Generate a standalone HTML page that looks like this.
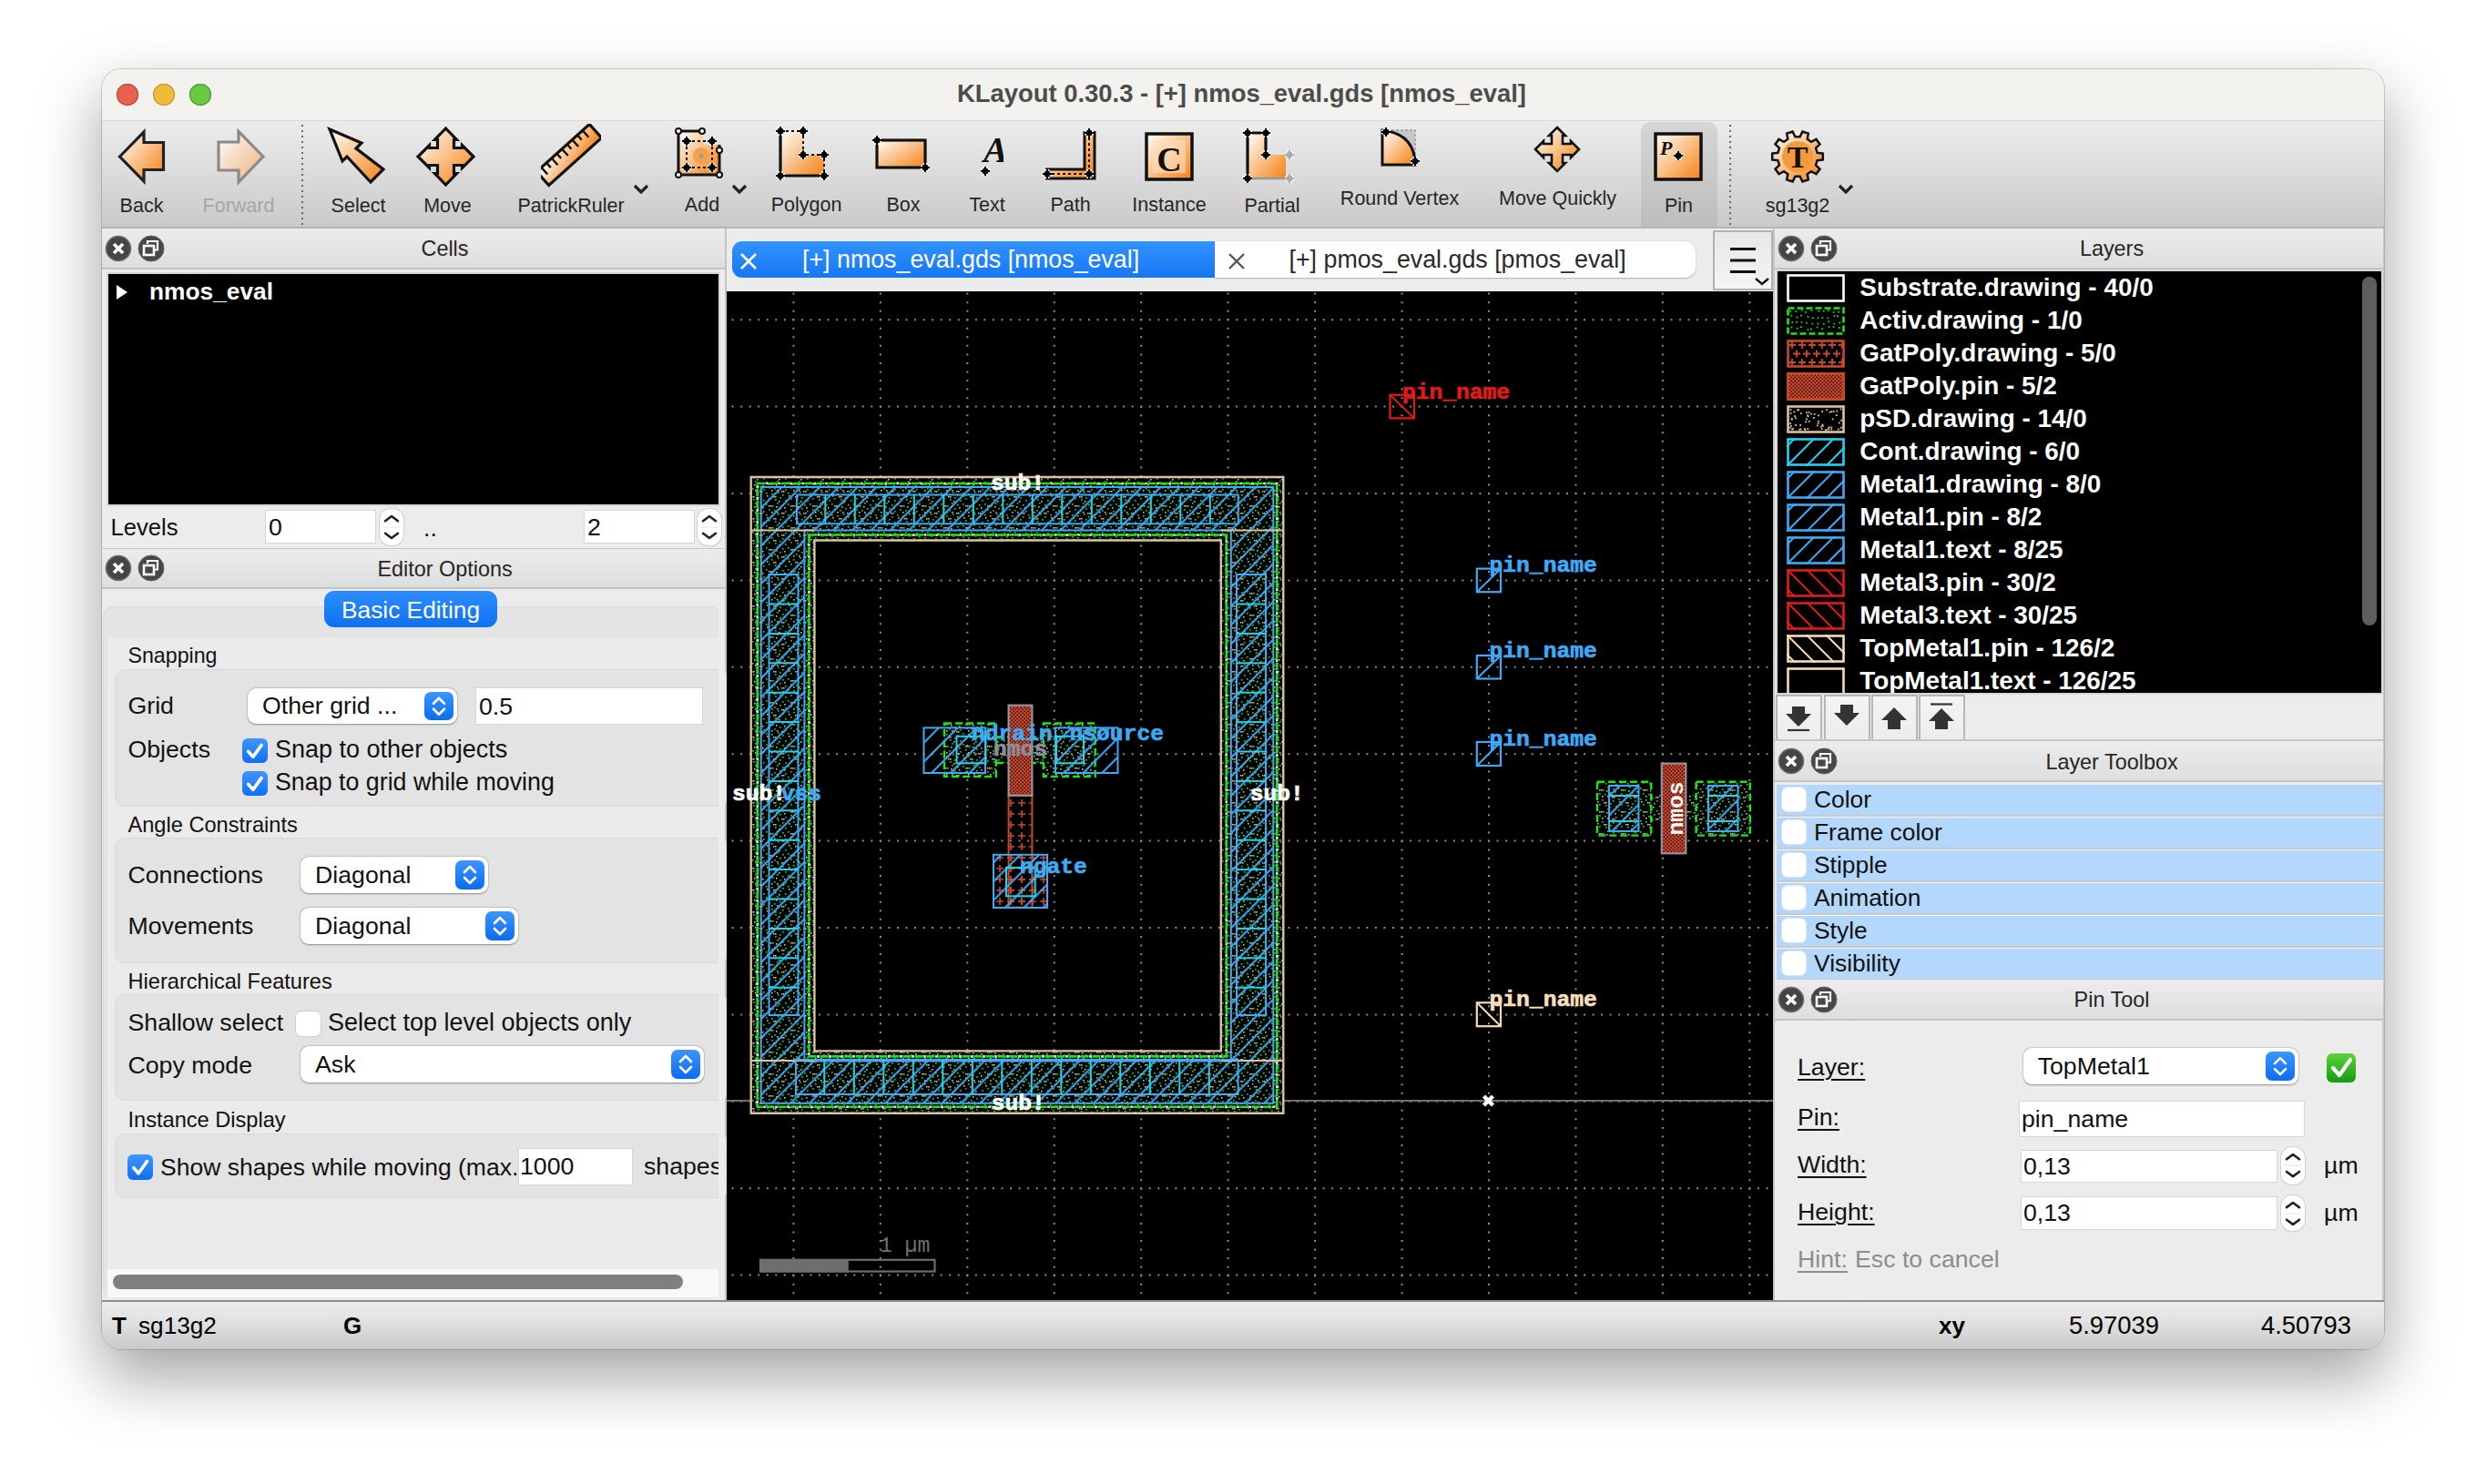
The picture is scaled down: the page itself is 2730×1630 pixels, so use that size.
<!DOCTYPE html><html><head><meta charset="utf-8"><style>html,body{margin:0;padding:0;}body{width:2730px;height:1630px;position:relative;overflow:hidden;background:#fff;font-family:"Liberation Sans",sans-serif;}</style></head><body>
<div style="position:absolute;left:112.00px;top:75.50px;width:2506.00px;height:1406.50px;border-radius:21px;background:#ececec;box-shadow:0 30px 70px 2px rgba(0,0,0,0.36), 0 0 0 1px rgba(0,0,0,0.16);"></div>
<div style="position:absolute;left:112.00px;top:75.50px;width:2506.00px;height:57.50px;border-radius:21px 21px 0 0;background:#f3f2ef;border-bottom:1px solid #d6d6d6;box-sizing:border-box;"></div>
<div style="position:absolute;left:127.90px;top:92.10px;width:23.80px;height:23.80px;border-radius:50%;background:#e9624f;box-shadow:inset 0 0 0 1.2px #b94a3b;"></div>
<div style="position:absolute;left:168.30px;top:92.10px;width:23.80px;height:23.80px;border-radius:50%;background:#f0bb3a;box-shadow:inset 0 0 0 1.2px #c59a2e;"></div>
<div style="position:absolute;left:208.30px;top:92.10px;width:23.80px;height:23.80px;border-radius:50%;background:#6bc845;box-shadow:inset 0 0 0 1.2px #4b9a33;"></div>
<div style="position:absolute;top:88.80px;font:bold 27.4px/27.4px 'Liberation Sans', sans-serif;color:#4c4c4c;white-space:nowrap;left:1363.50px;transform:translateX(-50%);">KLayout 0.30.3 - [+] nmos_eval.gds [nmos_eval]</div>
<div style="position:absolute;left:112.00px;top:1428.00px;width:2506.00px;height:54.00px;border-radius:0 0 20px 20px;background:linear-gradient(#ececec,#e2e2e2 40%,#c9c9c9);border-top:2px solid #8e8e8e;box-sizing:border-box;"></div>
<div style="position:absolute;top:1442.99px;font:bold 26px/26px 'Liberation Sans', sans-serif;color:#000;white-space:nowrap;left:123.00px;">T</div>
<div style="position:absolute;top:1442.82px;font:normal 26.2px/26.2px 'Liberation Sans', sans-serif;color:#000;white-space:nowrap;left:152.00px;">sg13g2</div>
<div style="position:absolute;top:1442.99px;font:bold 26px/26px 'Liberation Sans', sans-serif;color:#000;white-space:nowrap;left:377.00px;">G</div>
<div style="position:absolute;top:1442.99px;font:bold 26px/26px 'Liberation Sans', sans-serif;color:#000;white-space:nowrap;left:2129.00px;">xy</div>
<div style="position:absolute;top:1441.80px;font:normal 27.4px/27.4px 'Liberation Sans', sans-serif;color:#000;white-space:nowrap;left:2272.00px;">5.97039</div>
<div style="position:absolute;top:1441.80px;font:normal 27.4px/27.4px 'Liberation Sans', sans-serif;color:#000;white-space:nowrap;left:2483.00px;">4.50793</div>
<div style="position:absolute;left:112.00px;top:133.00px;width:2506.00px;height:118.00px;background:linear-gradient(#ececec,#cacaca);border-bottom:2px solid #b4b4b4;box-sizing:border-box;"></div>
<div style="position:absolute;left:1802.00px;top:134.00px;width:84.00px;height:115.00px;border-radius:10px 10px 0 0;background:linear-gradient(#d6d6d6,#bdbdbd);"></div>
<div style="position:absolute;left:331.00px;top:137.00px;width:2.00px;height:110.00px;background:repeating-linear-gradient(#6a6a6a 0 2px, transparent 2px 6px);"></div>
<div style="position:absolute;left:1899.00px;top:137.00px;width:2.00px;height:110.00px;background:repeating-linear-gradient(#6a6a6a 0 2px, transparent 2px 6px);"></div>
<svg style="position:absolute;left:126px;top:140px;" width="60" height="64" viewBox="0 0 60 64"><defs><linearGradient id="gb" x1="0" y1="0" x2="1" y2="1"><stop offset="0" stop-color="#ffffff"/><stop offset="0.75" stop-color="#f7a04a"/><stop offset="1" stop-color="#f38320"/></linearGradient></defs><path d="M5.5 32 L32 5 L32 16.5 L53.5 16.5 L53.5 46.5 L32 46.5 L32 59 Z" fill="url(#gb)" stroke="#222" stroke-width="3.2" stroke-linejoin="miter"/></svg>
<div style="position:absolute;top:215.80px;font:normal 21.5px/21.5px 'Liberation Sans', sans-serif;color:#262626;white-space:nowrap;left:155.50px;transform:translateX(-50%);">Back</div>
<svg style="position:absolute;left:234px;top:140px;" width="60" height="64" viewBox="0 0 60 64"><defs><linearGradient id="gf" x1="0" y1="0" x2="1" y2="1"><stop offset="0" stop-color="#ffffff"/><stop offset="0.75" stop-color="#efc39a"/><stop offset="1" stop-color="#eab07a"/></linearGradient></defs><path d="M55 32 L28 4.5 L28 16 L6 16 L6 47 L28 47 L28 60 Z" fill="url(#gf)" stroke="#8a8a8a" stroke-width="3.2"/></svg>
<div style="position:absolute;top:215.80px;font:normal 21.5px/21.5px 'Liberation Sans', sans-serif;color:#a6a6a6;white-space:nowrap;left:262.00px;transform:translateX(-50%);">Forward</div>
<svg style="position:absolute;left:356px;top:136px;" width="72" height="70" viewBox="0 0 72 70"><defs><linearGradient id="gs" x1="0" y1="0" x2="1" y2="1"><stop offset="0" stop-color="#ffffff"/><stop offset="0.75" stop-color="#f7a04a"/><stop offset="1" stop-color="#f38320"/></linearGradient></defs><path d="M6 6 L41 21 L35 27 L65 50 L51 64 L25 36 L20 41 Z" fill="url(#gs)" stroke="#111" stroke-width="3.2" stroke-linejoin="miter"/></svg>
<div style="position:absolute;top:215.80px;font:normal 21.5px/21.5px 'Liberation Sans', sans-serif;color:#262626;white-space:nowrap;left:393.50px;transform:translateX(-50%);">Select</div>
<svg style="position:absolute;left:455px;top:137px;" width="72" height="70" viewBox="0 0 72 70"><defs><linearGradient id="gm" x1="0" y1="0" x2="1" y2="1"><stop offset="0" stop-color="#ffffff"/><stop offset="0.75" stop-color="#f7a04a"/><stop offset="1" stop-color="#f38320"/></linearGradient></defs><path d="M34.5 4 L46.5 16.5 L43.5 16.5 L43.5 25.5 L52.5 25.5 L52.5 22.5 L65 35 L52.5 47.5 L52.5 44.5 L43.5 44.5 L43.5 53.5 L46.5 53.5 L34.5 66 L22.5 53.5 L25.5 53.5 L25.5 44.5 L16.5 44.5 L16.5 47.5 L4 35 L16.5 22.5 L16.5 25.5 L25.5 25.5 L25.5 16.5 L22.5 16.5 Z" fill="url(#gm)" stroke="#111" stroke-width="3.2"/></svg>
<div style="position:absolute;top:215.80px;font:normal 21.5px/21.5px 'Liberation Sans', sans-serif;color:#262626;white-space:nowrap;left:491.50px;transform:translateX(-50%);">Move</div>
<svg style="position:absolute;left:594px;top:136px;" width="66" height="70" viewBox="0 0 66 70"><defs><linearGradient id="gr" x1="0" y1="0" x2="1" y2="1"><stop offset="0" stop-color="#ffffff"/><stop offset="0.75" stop-color="#f7a04a"/><stop offset="1" stop-color="#f38320"/></linearGradient></defs><g transform="translate(31,34) rotate(-42)"><rect x="-39" y="-10" width="78" height="20" fill="url(#gr)" stroke="#111" stroke-width="3.2"/><path d="M-32.0 -9 L-32.0 0" stroke="#111" stroke-width="2.4"/><path d="M-24.4 -9 L-24.4 -3" stroke="#111" stroke-width="2.4"/><path d="M-16.8 -9 L-16.8 0" stroke="#111" stroke-width="2.4"/><path d="M-9.2 -9 L-9.2 -3" stroke="#111" stroke-width="2.4"/><path d="M-1.6 -9 L-1.6 0" stroke="#111" stroke-width="2.4"/><path d="M6.0 -9 L6.0 -3" stroke="#111" stroke-width="2.4"/><path d="M13.6 -9 L13.6 0" stroke="#111" stroke-width="2.4"/><path d="M21.2 -9 L21.2 -3" stroke="#111" stroke-width="2.4"/><path d="M28.8 -9 L28.8 0" stroke="#111" stroke-width="2.4"/></g></svg>
<div style="position:absolute;top:215.80px;font:normal 21.5px/21.5px 'Liberation Sans', sans-serif;color:#262626;white-space:nowrap;left:627.00px;transform:translateX(-50%);">PatrickRuler</div>
<svg style="position:absolute;left:695px;top:202px;" width="18" height="12" viewBox="0 0 18 12"><path d="M2 2 L9 9 L16 2" fill="none" stroke="#222" stroke-width="3.2"/></svg>
<svg style="position:absolute;left:736px;top:138px;" width="62" height="64" viewBox="0 0 62 64"><defs><linearGradient id="ga" x1="0" y1="0" x2="1" y2="1"><stop offset="0" stop-color="#ffffff"/><stop offset="0.75" stop-color="#f7a04a"/><stop offset="1" stop-color="#f38320"/></linearGradient></defs><path d="M9 6 L35 6 L37 21 L54 21 L54 54 L9 54 Z" fill="url(#ga)"/><path d="M9 6 L9 54 L54 54 L54 21" fill="none" stroke="#111" stroke-width="3"/><path d="M9 6 L35 6" stroke="#111" stroke-width="3"/><circle cx="34" cy="33" r="9" fill="#f7a04a"/><path d="M18 17 L46 17 M18 46 L46 46 M18 17 L18 46 M46 17 L46 46" stroke="#111" stroke-width="2" stroke-dasharray="3 3"/><path d="M18 12 L18 22 M13 17 L23 17" stroke="#fff" stroke-width="5"/><path d="M18 12 L18 22 M13 17 L23 17" stroke="#000" stroke-width="2"/><circle cx="18" cy="17" r="2.6" fill="none" stroke="#000" stroke-width="1.8"/><path d="M46 12 L46 22 M41 17 L51 17" stroke="#fff" stroke-width="5"/><path d="M46 12 L46 22 M41 17 L51 17" stroke="#000" stroke-width="2"/><circle cx="46" cy="17" r="2.6" fill="none" stroke="#000" stroke-width="1.8"/><path d="M18 41 L18 51 M13 46 L23 46" stroke="#fff" stroke-width="5"/><path d="M18 41 L18 51 M13 46 L23 46" stroke="#000" stroke-width="2"/><circle cx="18" cy="46" r="2.6" fill="none" stroke="#000" stroke-width="1.8"/><path d="M46 41 L46 51 M41 46 L51 46" stroke="#fff" stroke-width="5"/><path d="M46 41 L46 51 M41 46 L51 46" stroke="#000" stroke-width="2"/><circle cx="46" cy="46" r="2.6" fill="none" stroke="#000" stroke-width="1.8"/><circle cx="9" cy="6" r="3" fill="#fff" stroke="#111" stroke-width="2"/><circle cx="35" cy="6" r="3" fill="#fff" stroke="#111" stroke-width="2"/><circle cx="54" cy="54" r="3" fill="#fff" stroke="#111" stroke-width="2"/><circle cx="9" cy="54" r="3" fill="#fff" stroke="#111" stroke-width="2"/><circle cx="54" cy="27" r="3" fill="#fff" stroke="#111" stroke-width="2"/><circle cx="34" cy="33" r="2.5" fill="#999"/></svg>
<div style="position:absolute;top:214.80px;font:normal 21.5px/21.5px 'Liberation Sans', sans-serif;color:#262626;white-space:nowrap;left:771.00px;transform:translateX(-50%);">Add</div>
<svg style="position:absolute;left:803px;top:202px;" width="18" height="12" viewBox="0 0 18 12"><path d="M2 2 L9 9 L16 2" fill="none" stroke="#222" stroke-width="3.2"/></svg>
<svg style="position:absolute;left:849px;top:137px;" width="66" height="66" viewBox="0 0 66 66"><defs><linearGradient id="gp" x1="0" y1="0" x2="1" y2="1"><stop offset="0" stop-color="#ffffff"/><stop offset="0.75" stop-color="#f7a04a"/><stop offset="1" stop-color="#f38320"/></linearGradient></defs><path d="M8 7 L8 56 L56 56 L56 33 L33 33 L33 7 Z" fill="url(#gp)"/><path d="M8 7 L8 56 L56 56" fill="none" stroke="#111" stroke-width="3.2"/><path d="M8 7 L33 7 L33 33 L56 33 L56 56" fill="none" stroke="#111" stroke-width="2" stroke-dasharray="3 3"/><path d="M8 2 L8 12 M3 7 L13 7" stroke="#fff" stroke-width="5"/><path d="M8 2 L8 12 M3 7 L13 7" stroke="#000" stroke-width="2"/><circle cx="8" cy="7" r="2.6" fill="none" stroke="#000" stroke-width="1.8"/><path d="M33 2 L33 12 M28 7 L38 7" stroke="#fff" stroke-width="5"/><path d="M33 2 L33 12 M28 7 L38 7" stroke="#000" stroke-width="2"/><circle cx="33" cy="7" r="2.6" fill="none" stroke="#000" stroke-width="1.8"/><path d="M33 28 L33 38 M28 33 L38 33" stroke="#fff" stroke-width="5"/><path d="M33 28 L33 38 M28 33 L38 33" stroke="#000" stroke-width="2"/><circle cx="33" cy="33" r="2.6" fill="none" stroke="#000" stroke-width="1.8"/><path d="M56 28 L56 38 M51 33 L61 33" stroke="#fff" stroke-width="5"/><path d="M56 28 L56 38 M51 33 L61 33" stroke="#000" stroke-width="2"/><circle cx="56" cy="33" r="2.6" fill="none" stroke="#000" stroke-width="1.8"/><path d="M56 51 L56 61 M51 56 L61 56" stroke="#fff" stroke-width="5"/><path d="M56 51 L56 61 M51 56 L61 56" stroke="#000" stroke-width="2"/><circle cx="56" cy="56" r="2.6" fill="none" stroke="#000" stroke-width="1.8"/><path d="M8 51 L8 61 M3 56 L13 56" stroke="#fff" stroke-width="5"/><path d="M8 51 L8 61 M3 56 L13 56" stroke="#000" stroke-width="2"/><circle cx="8" cy="56" r="2.6" fill="none" stroke="#000" stroke-width="1.8"/></svg>
<div style="position:absolute;top:214.80px;font:normal 21.5px/21.5px 'Liberation Sans', sans-serif;color:#262626;white-space:nowrap;left:885.50px;transform:translateX(-50%);">Polygon</div>
<svg style="position:absolute;left:957px;top:148px;" width="66" height="44" viewBox="0 0 66 44"><defs><linearGradient id="gx" x1="0" y1="0" x2="1" y2="1"><stop offset="0" stop-color="#ffffff"/><stop offset="0.75" stop-color="#f7a04a"/><stop offset="1" stop-color="#f38320"/></linearGradient></defs><rect x="6" y="6" width="53" height="30" fill="url(#gx)" stroke="#111" stroke-width="3.2"/><path d="M6 1 L6 11 M1 6 L11 6" stroke="#fff" stroke-width="5"/><path d="M6 1 L6 11 M1 6 L11 6" stroke="#000" stroke-width="2"/><circle cx="6" cy="6" r="2.6" fill="none" stroke="#000" stroke-width="1.8"/><path d="M59 31 L59 41 M54 36 L64 36" stroke="#fff" stroke-width="5"/><path d="M59 31 L59 41 M54 36 L64 36" stroke="#000" stroke-width="2"/><circle cx="59" cy="36" r="2.6" fill="none" stroke="#000" stroke-width="1.8"/></svg>
<div style="position:absolute;top:214.80px;font:normal 21.5px/21.5px 'Liberation Sans', sans-serif;color:#262626;white-space:nowrap;left:992.00px;transform:translateX(-50%);">Box</div>
<svg style="position:absolute;left:1066px;top:144px;" width="36" height="56" viewBox="0 0 36 56"><text x="14" y="34" font-family="Liberation Serif" font-style="italic" font-weight="bold" font-size="40" fill="#111">A</text><path d="M16 39 L16 49 M11 44 L21 44" stroke="#fff" stroke-width="5"/><path d="M16 39 L16 49 M11 44 L21 44" stroke="#000" stroke-width="2"/><circle cx="16" cy="44" r="2.6" fill="none" stroke="#000" stroke-width="1.8"/></svg>
<div style="position:absolute;top:214.80px;font:normal 21.5px/21.5px 'Liberation Sans', sans-serif;color:#262626;white-space:nowrap;left:1084.00px;transform:translateX(-50%);">Text</div>
<svg style="position:absolute;left:1144px;top:140px;" width="62" height="62" viewBox="0 0 62 62"><defs><linearGradient id="gq" x1="0" y1="0" x2="1" y2="1"><stop offset="0" stop-color="#ffffff"/><stop offset="0.75" stop-color="#f7a04a"/><stop offset="1" stop-color="#f38320"/></linearGradient></defs><path d="M4 46 L4 56 L58 56 L58 4 L47 4 L47 46 Z" fill="url(#gq)"/><path d="M4 46 L47 46 L47 4 M58 4 L58 56 L4 56" fill="none" stroke="#111" stroke-width="3"/><path d="M52 5 L52 51 L8 51" fill="none" stroke="#111" stroke-width="2" stroke-dasharray="3 3"/><path d="M52 1 L52 11 M47 6 L57 6" stroke="#fff" stroke-width="5"/><path d="M52 1 L52 11 M47 6 L57 6" stroke="#000" stroke-width="2"/><circle cx="52" cy="6" r="2.6" fill="none" stroke="#000" stroke-width="1.8"/><path d="M52 46 L52 56 M47 51 L57 51" stroke="#fff" stroke-width="5"/><path d="M52 46 L52 56 M47 51 L57 51" stroke="#000" stroke-width="2"/><circle cx="52" cy="51" r="2.6" fill="none" stroke="#000" stroke-width="1.8"/><path d="M6 46 L6 56 M1 51 L11 51" stroke="#fff" stroke-width="5"/><path d="M6 46 L6 56 M1 51 L11 51" stroke="#000" stroke-width="2"/><circle cx="6" cy="51" r="2.6" fill="none" stroke="#000" stroke-width="1.8"/></svg>
<div style="position:absolute;top:214.80px;font:normal 21.5px/21.5px 'Liberation Sans', sans-serif;color:#262626;white-space:nowrap;left:1175.50px;transform:translateX(-50%);">Path</div>
<svg style="position:absolute;left:1256px;top:144px;" width="56" height="56" viewBox="0 0 56 56"><defs><linearGradient id="gi" x1="0" y1="0" x2="1" y2="1"><stop offset="0" stop-color="#ffffff"/><stop offset="0.75" stop-color="#f7a04a"/><stop offset="1" stop-color="#f38320"/></linearGradient></defs><rect x="3" y="3" width="50" height="50" fill="url(#gi)" stroke="#111" stroke-width="3.5"/><rect x="10" y="10" width="36" height="36" fill="#fde0c0" opacity="0.6"/><text x="28" y="44" text-anchor="middle" font-family="Liberation Serif" font-weight="bold" font-size="38" fill="#111">C</text></svg>
<div style="position:absolute;top:214.80px;font:normal 21.5px/21.5px 'Liberation Sans', sans-serif;color:#262626;white-space:nowrap;left:1284.00px;transform:translateX(-50%);">Instance</div>
<svg style="position:absolute;left:1364px;top:140px;" width="64" height="64" viewBox="0 0 64 64"><defs><linearGradient id="gpa" x1="0" y1="0" x2="1" y2="1"><stop offset="0" stop-color="#ffffff"/><stop offset="0.75" stop-color="#f7a04a"/><stop offset="1" stop-color="#f38320"/></linearGradient></defs><path d="M6 6 L6 56 L48 56 L48 30 L26 30 L26 6 Z" fill="url(#gpa)"/><path d="M6 6 L6 56 M6 6 L26 6 L26 30" fill="none" stroke="#111" stroke-width="3.2"/><path d="M6 56 L48 56" stroke="#999" stroke-width="2.5"/><path d="M6 1 L6 11 M1 6 L11 6" stroke="#fff" stroke-width="5"/><path d="M6 1 L6 11 M1 6 L11 6" stroke="#000" stroke-width="2"/><circle cx="6" cy="6" r="2.6" fill="none" stroke="#000" stroke-width="1.8"/><path d="M26 1 L26 11 M21 6 L31 6" stroke="#fff" stroke-width="5"/><path d="M26 1 L26 11 M21 6 L31 6" stroke="#000" stroke-width="2"/><circle cx="26" cy="6" r="2.6" fill="none" stroke="#000" stroke-width="1.8"/><path d="M26 25 L26 35 M21 30 L31 30" stroke="#fff" stroke-width="5"/><path d="M26 25 L26 35 M21 30 L31 30" stroke="#000" stroke-width="2"/><circle cx="26" cy="30" r="2.6" fill="none" stroke="#000" stroke-width="1.8"/><path d="M6 51 L6 61 M1 56 L11 56" stroke="#fff" stroke-width="5"/><path d="M6 51 L6 61 M1 56 L11 56" stroke="#000" stroke-width="2"/><circle cx="6" cy="56" r="2.6" fill="none" stroke="#000" stroke-width="1.8"/><path d="M52 25 L52 35 M47 30 L57 30" stroke="#fff" stroke-width="5"/><path d="M52 25 L52 35 M47 30 L57 30" stroke="#aaa" stroke-width="2"/><circle cx="52" cy="30" r="2.6" fill="none" stroke="#aaa" stroke-width="1.8"/><path d="M52 51 L52 61 M47 56 L57 56" stroke="#fff" stroke-width="5"/><path d="M52 51 L52 61 M47 56 L57 56" stroke="#aaa" stroke-width="2"/><circle cx="52" cy="56" r="2.6" fill="none" stroke="#aaa" stroke-width="1.8"/></svg>
<div style="position:absolute;top:215.80px;font:normal 21.5px/21.5px 'Liberation Sans', sans-serif;color:#262626;white-space:nowrap;left:1397.00px;transform:translateX(-50%);">Partial</div>
<svg style="position:absolute;left:1514px;top:139px;" width="48" height="48" viewBox="0 0 48 48"><defs><linearGradient id="grv" x1="0" y1="0" x2="1" y2="1"><stop offset="0" stop-color="#ffffff"/><stop offset="0.75" stop-color="#f7a04a"/><stop offset="1" stop-color="#f38320"/></linearGradient></defs><path d="M4 4 L40 4 L40 42 L4 42 Z" fill="#c8c8c8" stroke="#999" stroke-width="1.5" stroke-dasharray="3 2"/><path d="M4 4 Q40 8 40 42 L4 42 Z" fill="url(#grv)" stroke="#111" stroke-width="3"/><path d="M8 1 L8 11 M3 6 L13 6" stroke="#fff" stroke-width="5"/><path d="M8 1 L8 11 M3 6 L13 6" stroke="#000" stroke-width="2"/><circle cx="8" cy="6" r="2.6" fill="none" stroke="#000" stroke-width="1.8"/><path d="M40 33 L40 43 M35 38 L45 38" stroke="#fff" stroke-width="5"/><path d="M40 33 L40 43 M35 38 L45 38" stroke="#000" stroke-width="2"/><circle cx="40" cy="38" r="2.6" fill="none" stroke="#000" stroke-width="1.8"/></svg>
<div style="position:absolute;top:207.80px;font:normal 21.5px/21.5px 'Liberation Sans', sans-serif;color:#262626;white-space:nowrap;left:1537.00px;transform:translateX(-50%);">Round Vertex</div>
<svg style="position:absolute;left:1683px;top:137px;" width="54" height="54" viewBox="0 0 54 54"><defs><linearGradient id="gmq" x1="0" y1="0" x2="1" y2="1"><stop offset="0" stop-color="#ffffff"/><stop offset="0.75" stop-color="#f7a04a"/><stop offset="1" stop-color="#f38320"/></linearGradient></defs><path d="M27 3 L36 12 L33 12 L33 21 L42 21 L42 18 L51 27 L42 36 L42 33 L33 33 L33 42 L36 42 L27 51 L18 42 L21 42 L21 33 L12 33 L12 36 L3 27 L12 18 L12 21 L21 21 L21 12 L18 12 Z" fill="url(#gmq)" stroke="#111" stroke-width="2.6"/></svg>
<div style="position:absolute;top:207.80px;font:normal 21.5px/21.5px 'Liberation Sans', sans-serif;color:#262626;white-space:nowrap;left:1710.50px;transform:translateX(-50%);">Move Quickly</div>
<svg style="position:absolute;left:1815px;top:144px;" width="57" height="57" viewBox="0 0 57 57"><defs><linearGradient id="gpin" x1="0" y1="0" x2="1" y2="1"><stop offset="0" stop-color="#ffffff"/><stop offset="0.75" stop-color="#f7a04a"/><stop offset="1" stop-color="#f38320"/></linearGradient></defs><rect x="3" y="3" width="50" height="50" fill="url(#gpin)" stroke="#111" stroke-width="3.5"/><text x="8" y="26" font-family="Liberation Serif" font-style="italic" font-weight="bold" font-size="22" fill="#111">P</text><path d="M28 22 L28 32 M23 27 L33 27" stroke="#fff" stroke-width="5"/><path d="M28 22 L28 32 M23 27 L33 27" stroke="#000" stroke-width="2"/><circle cx="28" cy="27" r="2.6" fill="none" stroke="#000" stroke-width="1.8"/></svg>
<div style="position:absolute;top:215.80px;font:normal 21.5px/21.5px 'Liberation Sans', sans-serif;color:#262626;white-space:nowrap;left:1843.50px;transform:translateX(-50%);">Pin</div>
<svg style="position:absolute;left:1944px;top:142px;" width="60" height="60" viewBox="0 0 60 60"><defs><linearGradient id="gg" x1="0" y1="0" x2="1" y2="1"><stop offset="0" stop-color="#ffffff"/><stop offset="0.75" stop-color="#f7a04a"/><stop offset="1" stop-color="#f38320"/></linearGradient></defs><path d="M57.8 26.6 L57.8 33.4 L51.6 34.2 L50.0 39.3 L54.5 43.6 L50.5 49.1 L45.0 46.1 L40.7 49.2 L41.8 55.4 L35.4 57.5 L32.6 51.8 L27.4 51.8 L24.6 57.5 L18.2 55.4 L19.3 49.2 L15.0 46.1 L9.5 49.1 L5.5 43.6 L10.0 39.3 L8.4 34.2 L2.2 33.4 L2.2 26.6 L8.4 25.8 L10.0 20.7 L5.5 16.4 L9.5 10.9 L15.0 13.9 L19.3 10.8 L18.2 4.6 L24.6 2.5 L27.4 8.2 L32.6 8.2 L35.4 2.5 L41.8 4.6 L40.7 10.8 L45.0 13.9 L50.5 10.9 L54.5 16.4 L50.0 20.7 L51.6 25.8 Z" fill="url(#gg)" stroke="#111" stroke-width="2.5"/><circle cx="30" cy="30" r="17" fill="#f59a3c"/><text x="30" y="42" text-anchor="middle" font-family="Liberation Serif" font-weight="bold" font-size="34" fill="#111">T</text></svg>
<div style="position:absolute;top:215.80px;font:normal 21.5px/21.5px 'Liberation Sans', sans-serif;color:#262626;white-space:nowrap;left:1974.00px;transform:translateX(-50%);">sg13g2</div>
<svg style="position:absolute;left:2018px;top:202px;" width="18" height="12" viewBox="0 0 18 12"><path d="M2 2 L9 9 L16 2" fill="none" stroke="#222" stroke-width="3.2"/></svg>
<div style="position:absolute;left:112.00px;top:251.00px;width:685.00px;height:1177.00px;background:#ececec;"></div>
<div style="position:absolute;left:796.00px;top:251.00px;width:2.00px;height:1177.00px;background:#c4c4c4;"></div>
<div style="position:absolute;left:112.00px;top:251.00px;width:684.00px;height:45.00px;background:linear-gradient(#ececec,#dedede);border-bottom:2px solid #c3c3c3;box-sizing:border-box;"></div>
<svg style="position:absolute;left:115px;top:257.5px;" width="30" height="30" viewBox="0 0 30 30"><circle cx="15" cy="15" r="13.5" fill="#454545" stroke="#6c6c6c" stroke-width="1.6"/><path d="M10 10 L20 20 M20 10 L10 20" stroke="#fff" stroke-width="3.6"/></svg>
<svg style="position:absolute;left:151px;top:257.5px;" width="30" height="30" viewBox="0 0 30 30"><circle cx="15" cy="15" r="14" fill="#474747" stroke="#666" stroke-width="1"/><path d="M11 10 L11 7 L22 7 L22 16.5 L18.5 16.5" fill="none" stroke="#fff" stroke-width="2.2"/><rect x="7" y="12" width="11" height="10" fill="none" stroke="#fff" stroke-width="2.6"/></svg>
<div style="position:absolute;top:262.19px;font:normal 23.4px/23.4px 'Liberation Sans', sans-serif;color:#262626;white-space:nowrap;left:488.50px;transform:translateX(-50%);">Cells</div>
<div style="position:absolute;left:117.00px;top:299.00px;width:674.00px;height:257.00px;background:#000;border:2px solid #d8d8d8;box-sizing:border-box;"></div>
<svg style="position:absolute;left:125px;top:311px;" width="18" height="20" viewBox="0 0 18 20"><path d="M3 2 L15 10 L3 18 Z" fill="#fff"/></svg>
<div style="position:absolute;top:306.73px;font:bold 26.3px/26.3px 'Liberation Sans', sans-serif;color:#fff;white-space:nowrap;left:164.00px;">nmos_eval</div>
<div style="position:absolute;top:567.32px;font:normal 25.6px/25.6px 'Liberation Sans', sans-serif;color:#111;white-space:nowrap;left:121.50px;">Levels</div>
<div style="position:absolute;left:292.00px;top:561.00px;width:120.00px;height:35.00px;background:#fff;box-shadow:0 0 0 1px #d6d6d6, 0 1px 0 #c0c0c0;"></div>
<div style="position:absolute;top:565.51px;font:normal 26.7px/26.7px 'Liberation Sans', sans-serif;color:#111;white-space:nowrap;left:295.00px;">0</div>
<div style="position:absolute;left:417.00px;top:559.00px;width:26.00px;height:40.00px;background:#fff;border-radius:12px;box-shadow:0 0 0 1px #d0d0d0, 0 1px 1px rgba(0,0,0,0.15);"></div>
<svg style="position:absolute;left:417px;top:559px;" width="26" height="40" viewBox="0 0 26 40"><path d="M6.0 13.200000000000001 L13.0 8.0 L20.0 13.200000000000001 M6.0 26.8 L13.0 32.0 L20.0 26.8" fill="none" stroke="#222" stroke-width="2.6" stroke-linecap="round" stroke-linejoin="round"/><path d="M3 20.0 L23 20.0" stroke="#e2e2e2" stroke-width="1"/></svg>
<div style="position:absolute;top:567.39px;font:normal 26.7px/26.7px 'Liberation Sans', sans-serif;color:#111;white-space:nowrap;left:465.00px;">..</div>
<div style="position:absolute;left:642.00px;top:561.00px;width:120.00px;height:35.00px;background:#fff;box-shadow:0 0 0 1px #d6d6d6, 0 1px 0 #c0c0c0;"></div>
<div style="position:absolute;top:565.51px;font:normal 26.7px/26.7px 'Liberation Sans', sans-serif;color:#111;white-space:nowrap;left:645.00px;">2</div>
<div style="position:absolute;left:766.00px;top:559.00px;width:26.00px;height:40.00px;background:#fff;border-radius:12px;box-shadow:0 0 0 1px #d0d0d0, 0 1px 1px rgba(0,0,0,0.15);"></div>
<svg style="position:absolute;left:766px;top:559px;" width="26" height="40" viewBox="0 0 26 40"><path d="M6.0 13.200000000000001 L13.0 8.0 L20.0 13.200000000000001 M6.0 26.8 L13.0 32.0 L20.0 26.8" fill="none" stroke="#222" stroke-width="2.6" stroke-linecap="round" stroke-linejoin="round"/><path d="M3 20.0 L23 20.0" stroke="#e2e2e2" stroke-width="1"/></svg>
<div style="position:absolute;left:112.00px;top:602.00px;width:684.00px;height:2.00px;background:#c8c8c8;"></div>
<div style="position:absolute;left:112.00px;top:603.00px;width:684.00px;height:44.00px;background:linear-gradient(#ececec,#dedede);border-bottom:2px solid #c3c3c3;box-sizing:border-box;"></div>
<svg style="position:absolute;left:115px;top:609.0px;" width="30" height="30" viewBox="0 0 30 30"><circle cx="15" cy="15" r="13.5" fill="#454545" stroke="#6c6c6c" stroke-width="1.6"/><path d="M10 10 L20 20 M20 10 L10 20" stroke="#fff" stroke-width="3.6"/></svg>
<svg style="position:absolute;left:151px;top:609.0px;" width="30" height="30" viewBox="0 0 30 30"><circle cx="15" cy="15" r="14" fill="#474747" stroke="#666" stroke-width="1"/><path d="M11 10 L11 7 L22 7 L22 16.5 L18.5 16.5" fill="none" stroke="#fff" stroke-width="2.2"/><rect x="7" y="12" width="11" height="10" fill="none" stroke="#fff" stroke-width="2.6"/></svg>
<div style="position:absolute;top:614.19px;font:normal 23.4px/23.4px 'Liberation Sans', sans-serif;color:#262626;white-space:nowrap;left:488.50px;transform:translateX(-50%);">Editor Options</div>
<div style="position:absolute;left:113.00px;top:666.00px;width:678.00px;height:760.00px;background:#e4e4e4;border:1.5px solid #dadada;border-radius:11px;box-sizing:border-box;"></div>
<div style="position:absolute;left:118.00px;top:700.00px;width:671.00px;height:726.00px;background:#ebebeb;"></div>
<div style="position:absolute;left:356.00px;top:649.00px;width:190.00px;height:40.00px;background:linear-gradient(#2e8dff,#0e70f0);border-radius:11px;"></div>
<div style="position:absolute;top:656.73px;font:normal 26.3px/26.3px 'Liberation Sans', sans-serif;color:#fff;white-space:nowrap;left:451.00px;transform:translateX(-50%);">Basic Editing</div>
<div style="position:absolute;top:709.36px;font:normal 23.2px/23.2px 'Liberation Sans', sans-serif;color:#111;white-space:nowrap;left:140.50px;">Snapping</div>
<div style="position:absolute;left:126.00px;top:735.00px;width:674.00px;height:151.00px;background:#e3e3e3;border:1.5px solid #d9d9d9;border-radius:11px;box-sizing:border-box;"></div>
<div style="position:absolute;top:762.39px;font:normal 26.7px/26.7px 'Liberation Sans', sans-serif;color:#111;white-space:nowrap;left:140.50px;">Grid</div>
<div style="position:absolute;left:272.00px;top:755.50px;width:230.00px;height:39.50px;background:#fff;border-radius:9px;box-shadow:0 0.5px 2px rgba(0,0,0,0.35), 0 0 0 0.5px rgba(0,0,0,0.12);"></div>
<div style="position:absolute;top:762.26px;font:normal 26.7px/26.7px 'Liberation Sans', sans-serif;color:#111;white-space:nowrap;left:288.00px;">Other grid ...</div>
<div style="position:absolute;left:466.00px;top:759.50px;width:32.00px;height:31.50px;background:linear-gradient(#3d95ff,#0a6cf0);border-radius:7px;"></div>
<svg style="position:absolute;left:466px;top:759.5px;" width="32" height="31.5" viewBox="0 0 32 31.5"><path d="M10 12.75 L16 6.75 L22 12.75 M10 18.75 L16 24.75 L22 18.75" fill="none" stroke="#fff" stroke-width="2.6" stroke-linecap="round" stroke-linejoin="round"/></svg>
<div style="position:absolute;left:523.00px;top:756.00px;width:248.00px;height:39.00px;background:#fff;box-shadow:0 0 0 1px #d6d6d6, 0 1px 0 #c0c0c0;"></div>
<div style="position:absolute;top:762.51px;font:normal 26.7px/26.7px 'Liberation Sans', sans-serif;color:#111;white-space:nowrap;left:526.00px;">0.5</div>
<div style="position:absolute;top:810.39px;font:normal 26.7px/26.7px 'Liberation Sans', sans-serif;color:#111;white-space:nowrap;left:140.50px;">Objects</div>
<div style="position:absolute;left:266.00px;top:810.50px;width:27.50px;height:27.50px;background:linear-gradient(#3f96ff,#0f6ff2);border-radius:6px;"></div>
<svg style="position:absolute;left:266px;top:810.5px;" width="27.5" height="27.5" viewBox="0 0 27.5 27.5"><path d="M6.6 14.3 L11.825 20.35 L21.175 7.425000000000001" fill="none" stroke="#fff" stroke-width="3.6" stroke-linecap="round" stroke-linejoin="round"/></svg>
<div style="position:absolute;top:810.14px;font:normal 27.0px/27.0px 'Liberation Sans', sans-serif;color:#111;white-space:nowrap;left:302.00px;">Snap to other objects</div>
<div style="position:absolute;left:266.00px;top:846.50px;width:27.50px;height:27.50px;background:linear-gradient(#3f96ff,#0f6ff2);border-radius:6px;"></div>
<svg style="position:absolute;left:266px;top:846.5px;" width="27.5" height="27.5" viewBox="0 0 27.5 27.5"><path d="M6.6 14.3 L11.825 20.35 L21.175 7.425000000000001" fill="none" stroke="#fff" stroke-width="3.6" stroke-linecap="round" stroke-linejoin="round"/></svg>
<div style="position:absolute;top:846.31px;font:normal 26.8px/26.8px 'Liberation Sans', sans-serif;color:#111;white-space:nowrap;left:302.00px;">Snap to grid while moving</div>
<div style="position:absolute;top:894.52px;font:normal 23.6px/23.6px 'Liberation Sans', sans-serif;color:#111;white-space:nowrap;left:140.50px;">Angle Constraints</div>
<div style="position:absolute;left:126.00px;top:920.00px;width:674.00px;height:138.00px;background:#e3e3e3;border:1.5px solid #d9d9d9;border-radius:11px;box-sizing:border-box;"></div>
<div style="position:absolute;top:948.39px;font:normal 26.7px/26.7px 'Liberation Sans', sans-serif;color:#111;white-space:nowrap;left:140.50px;">Connections</div>
<div style="position:absolute;left:330.00px;top:941.00px;width:206.00px;height:40.00px;background:#fff;border-radius:9px;box-shadow:0 0.5px 2px rgba(0,0,0,0.35), 0 0 0 0.5px rgba(0,0,0,0.12);"></div>
<div style="position:absolute;top:948.01px;font:normal 26.7px/26.7px 'Liberation Sans', sans-serif;color:#111;white-space:nowrap;left:346.00px;">Diagonal</div>
<div style="position:absolute;left:500.00px;top:945.00px;width:32.00px;height:32.00px;background:linear-gradient(#3d95ff,#0a6cf0);border-radius:7px;"></div>
<svg style="position:absolute;left:500px;top:945px;" width="32" height="32" viewBox="0 0 32 32"><path d="M10 13.0 L16 7.0 L22 13.0 M10 19.0 L16 25.0 L22 19.0" fill="none" stroke="#fff" stroke-width="2.6" stroke-linecap="round" stroke-linejoin="round"/></svg>
<div style="position:absolute;top:1004.39px;font:normal 26.7px/26.7px 'Liberation Sans', sans-serif;color:#111;white-space:nowrap;left:140.50px;">Movements</div>
<div style="position:absolute;left:330.00px;top:997.00px;width:239.00px;height:40.00px;background:#fff;border-radius:9px;box-shadow:0 0.5px 2px rgba(0,0,0,0.35), 0 0 0 0.5px rgba(0,0,0,0.12);"></div>
<div style="position:absolute;top:1004.01px;font:normal 26.7px/26.7px 'Liberation Sans', sans-serif;color:#111;white-space:nowrap;left:346.00px;">Diagonal</div>
<div style="position:absolute;left:533.00px;top:1001.00px;width:32.00px;height:32.00px;background:linear-gradient(#3d95ff,#0a6cf0);border-radius:7px;"></div>
<svg style="position:absolute;left:533px;top:1001px;" width="32" height="32" viewBox="0 0 32 32"><path d="M10 13.0 L16 7.0 L22 13.0 M10 19.0 L16 25.0 L22 19.0" fill="none" stroke="#fff" stroke-width="2.6" stroke-linecap="round" stroke-linejoin="round"/></svg>
<div style="position:absolute;top:1067.02px;font:normal 23.6px/23.6px 'Liberation Sans', sans-serif;color:#111;white-space:nowrap;left:140.50px;">Hierarchical Features</div>
<div style="position:absolute;left:126.00px;top:1092.00px;width:674.00px;height:117.00px;background:#e3e3e3;border:1.5px solid #d9d9d9;border-radius:11px;box-sizing:border-box;"></div>
<div style="position:absolute;top:1110.39px;font:normal 26.7px/26.7px 'Liberation Sans', sans-serif;color:#111;white-space:nowrap;left:140.50px;">Shallow select</div>
<div style="position:absolute;left:324.50px;top:1110.50px;width:27.00px;height:27.00px;background:#fff;border-radius:6px;box-shadow:0 0 0 1px #cfcfcf, 0 1px 1px rgba(0,0,0,0.12);"></div>
<div style="position:absolute;top:1110.14px;font:normal 27.0px/27.0px 'Liberation Sans', sans-serif;color:#111;white-space:nowrap;left:360.00px;">Select top level objects only</div>
<div style="position:absolute;top:1156.89px;font:normal 26.7px/26.7px 'Liberation Sans', sans-serif;color:#111;white-space:nowrap;left:140.50px;">Copy mode</div>
<div style="position:absolute;left:330.00px;top:1149.00px;width:443.00px;height:40.00px;background:#fff;border-radius:9px;box-shadow:0 0.5px 2px rgba(0,0,0,0.35), 0 0 0 0.5px rgba(0,0,0,0.12);"></div>
<div style="position:absolute;top:1156.01px;font:normal 26.7px/26.7px 'Liberation Sans', sans-serif;color:#111;white-space:nowrap;left:346.00px;">Ask</div>
<div style="position:absolute;left:737.00px;top:1153.00px;width:32.00px;height:32.00px;background:linear-gradient(#3d95ff,#0a6cf0);border-radius:7px;"></div>
<svg style="position:absolute;left:737px;top:1153px;" width="32" height="32" viewBox="0 0 32 32"><path d="M10 13.0 L16 7.0 L22 13.0 M10 19.0 L16 25.0 L22 19.0" fill="none" stroke="#fff" stroke-width="2.6" stroke-linecap="round" stroke-linejoin="round"/></svg>
<div style="position:absolute;top:1219.02px;font:normal 23.6px/23.6px 'Liberation Sans', sans-serif;color:#111;white-space:nowrap;left:140.50px;">Instance Display</div>
<div style="position:absolute;left:126.00px;top:1245.00px;width:674.00px;height:71.00px;background:#e3e3e3;border:1.5px solid #d9d9d9;border-radius:11px;box-sizing:border-box;"></div>
<div style="position:absolute;left:140.00px;top:1268.00px;width:28.00px;height:28.00px;background:linear-gradient(#3f96ff,#0f6ff2);border-radius:6px;"></div>
<svg style="position:absolute;left:140px;top:1268px;" width="28" height="28" viewBox="0 0 28 28"><path d="M6.72 14.56 L12.04 20.72 L21.560000000000002 7.5600000000000005" fill="none" stroke="#fff" stroke-width="3.6" stroke-linecap="round" stroke-linejoin="round"/></svg>
<div style="position:absolute;top:1268.56px;font:normal 26.5px/26.5px 'Liberation Sans', sans-serif;color:#111;white-space:nowrap;left:176.00px;">Show shapes while moving (max.</div>
<div style="position:absolute;left:570.00px;top:1262.00px;width:124.00px;height:38.50px;background:#fff;box-shadow:0 0 0 1px #d6d6d6, 0 1px 0 #c0c0c0;"></div>
<div style="position:absolute;top:1268.26px;font:normal 26.7px/26.7px 'Liberation Sans', sans-serif;color:#111;white-space:nowrap;left:571.00px;">1000</div>
<div style="position:absolute;top:1268.39px;font:normal 26.7px/26.7px 'Liberation Sans', sans-serif;color:#111;white-space:nowrap;left:707.00px;">shapes</div>
<div style="position:absolute;left:789.00px;top:666.00px;width:7.00px;height:762.00px;background:#ececec;"></div>
<div style="position:absolute;left:118.00px;top:1394.00px;width:671.00px;height:31.00px;background:#f8f8f8;"></div>
<div style="position:absolute;left:124.00px;top:1400.00px;width:626.00px;height:16.00px;background:#7f7f7f;border-radius:8px;"></div>
<div style="position:absolute;left:798.00px;top:251.00px;width:1151.00px;height:69.00px;background:#ececec;"></div>
<div style="position:absolute;left:804.00px;top:265.00px;width:530.00px;height:40.00px;background:linear-gradient(#3292ff,#1677f5);border-radius:11px 0 0 11px;"></div>
<svg style="position:absolute;left:812px;top:277px;" width="20" height="20" viewBox="0 0 20 20"><path d="M2 2 L18 18 M18 2 L2 18" stroke="#fff" stroke-width="2.6"/></svg>
<div style="position:absolute;top:272.31px;font:normal 26.8px/26.8px 'Liberation Sans', sans-serif;color:#fff;white-space:nowrap;left:881.00px;">[+] nmos_eval.gds [nmos_eval]</div>
<div style="position:absolute;left:1334.00px;top:265.00px;width:528.00px;height:40.00px;background:#fff;border-radius:0 12px 12px 0;box-shadow:0 0.5px 1.5px rgba(0,0,0,0.25);"></div>
<svg style="position:absolute;left:1348px;top:277px;" width="20" height="20" viewBox="0 0 20 20"><path d="M2 2 L18 18 M18 2 L2 18" stroke="#555" stroke-width="2.4"/></svg>
<div style="position:absolute;top:272.31px;font:normal 26.8px/26.8px 'Liberation Sans', sans-serif;color:#2a2a2a;white-space:nowrap;left:1415.50px;">[+] pmos_eval.gds [pmos_eval]</div>
<div style="position:absolute;left:1881.00px;top:253.00px;width:66.00px;height:66.00px;background:linear-gradient(#e8e8e8,#f4f4f4);border:2px solid #b2b2b2;box-sizing:border-box;"></div>
<svg style="position:absolute;left:1895px;top:268px;" width="50" height="48" viewBox="0 0 50 48"><path d="M5 5.5 L33 5.5 M5 18 L33 18 M5 30.5 L33 30.5" stroke="#111" stroke-width="3.2"/><path d="M33 38 L40 44 L47 38" fill="none" stroke="#111" stroke-width="2.4"/></svg>
<svg style="position:absolute;left:798px;top:320px" width="1150" height="1108" viewBox="798 320 1150 1108"><defs><pattern id="hatch" patternUnits="userSpaceOnUse" width="20.8" height="20.8"><path d="M-2 22.8 L22.8 -2 M-12.4 12.4 L12.4 -12.4 M8.4 33.2 L33.2 8.4" stroke="#3fa9f5" stroke-width="2"/></pattern><pattern id="hatchc" patternUnits="userSpaceOnUse" width="20.8" height="20.8"><path d="M-2 22.8 L22.8 -2 M-12.4 12.4 L12.4 -12.4 M8.4 33.2 L33.2 8.4" stroke="#22d3ee" stroke-width="2"/></pattern><pattern id="hatchr" patternUnits="userSpaceOnUse" width="20.8" height="20.8"><path d="M-2 -2 L22.8 22.8 M-12.4 8.4 L12.4 33.2 M8.4 -12.4 L33.2 12.4" stroke="#e01b1b" stroke-width="2"/></pattern><pattern id="hatchb" patternUnits="userSpaceOnUse" width="20.8" height="20.8"><path d="M-2 -2 L22.8 22.8 M-12.4 8.4 L12.4 33.2 M8.4 -12.4 L33.2 12.4" stroke="#d9c3a3" stroke-width="2"/></pattern><pattern id="stip" patternUnits="userSpaceOnUse" width="24" height="24"><rect x="1" y="1" width="1.7" height="1.7" fill="#1cc41c"/><rect x="8" y="3" width="1.7" height="1.7" fill="#1cc41c"/><rect x="13" y="0" width="1.7" height="1.7" fill="#1cc41c"/><rect x="19" y="2" width="1.7" height="1.7" fill="#1cc41c"/><rect x="4" y="7" width="1.7" height="1.7" fill="#1cc41c"/><rect x="10" y="8" width="1.7" height="1.7" fill="#1cc41c"/><rect x="16" y="6" width="1.7" height="1.7" fill="#1cc41c"/><rect x="22" y="9" width="1.7" height="1.7" fill="#1cc41c"/><rect x="1" y="13" width="1.7" height="1.7" fill="#1cc41c"/><rect x="7" y="14" width="1.7" height="1.7" fill="#1cc41c"/><rect x="14" y="12" width="1.7" height="1.7" fill="#1cc41c"/><rect x="19" y="15" width="1.7" height="1.7" fill="#1cc41c"/><rect x="4" y="19" width="1.7" height="1.7" fill="#1cc41c"/><rect x="11" y="20" width="1.7" height="1.7" fill="#1cc41c"/><rect x="16" y="18" width="1.7" height="1.7" fill="#1cc41c"/><rect x="22" y="21" width="1.7" height="1.7" fill="#1cc41c"/><rect x="4" y="3" width="1.6" height="1.6" fill="#cdbd98"/><rect x="6" y="3" width="1.6" height="1.6" fill="#cdbd98"/><rect x="12" y="4" width="1.6" height="1.6" fill="#cdbd98"/><rect x="13" y="10" width="1.6" height="1.6" fill="#cdbd98"/><rect x="18" y="11" width="1.6" height="1.6" fill="#cdbd98"/><rect x="20" y="11" width="1.6" height="1.6" fill="#cdbd98"/><rect x="2" y="16" width="1.6" height="1.6" fill="#cdbd98"/><rect x="9" y="17" width="1.6" height="1.6" fill="#cdbd98"/><rect x="11" y="17" width="1.6" height="1.6" fill="#cdbd98"/><rect x="15" y="22" width="1.6" height="1.6" fill="#cdbd98"/><rect x="21" y="5" width="1.6" height="1.6" fill="#cdbd98"/><rect x="7" y="10" width="1.6" height="1.6" fill="#cdbd98"/></pattern><pattern id="cross" patternUnits="userSpaceOnUse" width="12" height="12"><path d="M6 2 L6 10 M2 6 L10 6" stroke="#c9482b" stroke-width="1.6"/></pattern><pattern id="dots" patternUnits="userSpaceOnUse" width="4" height="4"><rect width="4" height="4" fill="#c9482b"/><rect x="0.5" y="0.5" width="1.6" height="1.6" fill="#2a0a04"/><rect x="2.5" y="2.5" width="1.6" height="1.6" fill="#2a0a04"/></pattern></defs><rect x="798" y="320" width="1150" height="1108" fill="#000"/><line x1="871.4" y1="313.03999999999996" x2="871.4" y2="1428" stroke="#8c8c8c" stroke-width="2" stroke-dasharray="2 7.545" stroke-dashoffset="1.000000000000007"/><line x1="966.85" y1="313.03999999999996" x2="966.85" y2="1428" stroke="#8c8c8c" stroke-width="2" stroke-dasharray="2 7.545" stroke-dashoffset="1.000000000000007"/><line x1="1062.3" y1="313.03999999999996" x2="1062.3" y2="1428" stroke="#8c8c8c" stroke-width="2" stroke-dasharray="2 7.545" stroke-dashoffset="1.000000000000007"/><line x1="1157.75" y1="313.03999999999996" x2="1157.75" y2="1428" stroke="#8c8c8c" stroke-width="2" stroke-dasharray="2 7.545" stroke-dashoffset="1.000000000000007"/><line x1="1253.2" y1="313.03999999999996" x2="1253.2" y2="1428" stroke="#8c8c8c" stroke-width="2" stroke-dasharray="2 7.545" stroke-dashoffset="1.000000000000007"/><line x1="1348.65" y1="313.03999999999996" x2="1348.65" y2="1428" stroke="#8c8c8c" stroke-width="2" stroke-dasharray="2 7.545" stroke-dashoffset="1.000000000000007"/><line x1="1444.1" y1="313.03999999999996" x2="1444.1" y2="1428" stroke="#8c8c8c" stroke-width="2" stroke-dasharray="2 7.545" stroke-dashoffset="1.000000000000007"/><line x1="1539.55" y1="313.03999999999996" x2="1539.55" y2="1428" stroke="#8c8c8c" stroke-width="2" stroke-dasharray="2 7.545" stroke-dashoffset="1.000000000000007"/><line x1="1635.0" y1="313.03999999999996" x2="1635.0" y2="1428" stroke="#8c8c8c" stroke-width="2" stroke-dasharray="2 7.545" stroke-dashoffset="1.000000000000007"/><line x1="1730.45" y1="313.03999999999996" x2="1730.45" y2="1428" stroke="#8c8c8c" stroke-width="2" stroke-dasharray="2 7.545" stroke-dashoffset="1.000000000000007"/><line x1="1825.9" y1="313.03999999999996" x2="1825.9" y2="1428" stroke="#8c8c8c" stroke-width="2" stroke-dasharray="2 7.545" stroke-dashoffset="1.000000000000007"/><line x1="1921.35" y1="313.03999999999996" x2="1921.35" y2="1428" stroke="#8c8c8c" stroke-width="2" stroke-dasharray="2 7.545" stroke-dashoffset="1.000000000000007"/><line x1="795.04" y1="351.2" x2="1948" y2="351.2" stroke="#8c8c8c" stroke-width="2" stroke-dasharray="2 7.545" stroke-dashoffset="1.0"/><line x1="795.04" y1="446.6" x2="1948" y2="446.6" stroke="#8c8c8c" stroke-width="2" stroke-dasharray="2 7.545" stroke-dashoffset="1.0"/><line x1="795.04" y1="542.0" x2="1948" y2="542.0" stroke="#8c8c8c" stroke-width="2" stroke-dasharray="2 7.545" stroke-dashoffset="1.0"/><line x1="795.04" y1="637.4000000000001" x2="1948" y2="637.4000000000001" stroke="#8c8c8c" stroke-width="2" stroke-dasharray="2 7.545" stroke-dashoffset="1.0"/><line x1="795.04" y1="732.8" x2="1948" y2="732.8" stroke="#8c8c8c" stroke-width="2" stroke-dasharray="2 7.545" stroke-dashoffset="1.0"/><line x1="795.04" y1="828.2" x2="1948" y2="828.2" stroke="#8c8c8c" stroke-width="2" stroke-dasharray="2 7.545" stroke-dashoffset="1.0"/><line x1="795.04" y1="923.6000000000001" x2="1948" y2="923.6000000000001" stroke="#8c8c8c" stroke-width="2" stroke-dasharray="2 7.545" stroke-dashoffset="1.0"/><line x1="795.04" y1="1019.0" x2="1948" y2="1019.0" stroke="#8c8c8c" stroke-width="2" stroke-dasharray="2 7.545" stroke-dashoffset="1.0"/><line x1="795.04" y1="1114.4" x2="1948" y2="1114.4" stroke="#8c8c8c" stroke-width="2" stroke-dasharray="2 7.545" stroke-dashoffset="1.0"/><line x1="795.04" y1="1209.8" x2="1948" y2="1209.8" stroke="#8c8c8c" stroke-width="2" stroke-dasharray="2 7.545" stroke-dashoffset="1.0"/><line x1="795.04" y1="1305.2" x2="1948" y2="1305.2" stroke="#8c8c8c" stroke-width="2" stroke-dasharray="2 7.545" stroke-dashoffset="1.0"/><line x1="795.04" y1="1400.6000000000001" x2="1948" y2="1400.6000000000001" stroke="#8c8c8c" stroke-width="2" stroke-dasharray="2 7.545" stroke-dashoffset="1.0"/><line x1="798" y1="1209" x2="1948" y2="1209" stroke="#707070" stroke-width="2"/><path d="M824.7 524 H1409.3 V1222.7 H824.7 Z M894.4 593.5 V1154.4 H1340.8 V593.5 Z" fill="#000"/><path d="M824.7 524 H1409.3 V1222.7 H824.7 Z M894.4 593.5 V1154.4 H1340.8 V593.5 Z" fill="url(#stip)" fill-rule="evenodd"/><path d="M835.7 535 H1398.3 V1211.7 H835.7 Z M883.4 582.5 V1165.4 H1351.8 V582.5 Z" fill="url(#hatch)" fill-rule="evenodd" stroke="#3fa9f5" stroke-width="2"/><path d="M831.7 531 H1402.3 V1215.7 H831.7 Z M888.4 587.5 V1160.4 H1346.8 V587.5 Z" fill="none" stroke="#19e619" stroke-width="2.6" stroke-dasharray="9 4"/><path d="M831.7 531 H1402.3 V1215.7 H831.7 Z M888.4 587.5 V1160.4 H1346.8 V587.5 Z" fill="none" stroke="#e8ffe8" stroke-width="2.6" stroke-dasharray="3 10" stroke-dashoffset="-9.5" opacity="0.85"/><path d="M824.7 524 H1409.3 V1222.7 H824.7 Z M894.4 593.5 V1154.4 H1340.8 V593.5 Z" fill="none" stroke="#d9c3a3" stroke-width="2.4"/><path d="M824.7 582.6 H894.4 M1340.8 582.6 H1409.3 M824.7 1165 H894.4 M1340.8 1165 H1409.3" stroke="#d9c3a3" stroke-width="2"/><rect x="875" y="543.5" width="484.79999999999995" height="31.799999999999955" fill="none" stroke="#3fa9f5" stroke-width="2"/><line x1="906.3" y1="543.5" x2="906.3" y2="575.3" stroke="#22d3ee" stroke-width="2"/><line x1="938.8" y1="543.5" x2="938.8" y2="575.3" stroke="#22d3ee" stroke-width="2"/><line x1="971.3" y1="543.5" x2="971.3" y2="575.3" stroke="#22d3ee" stroke-width="2"/><line x1="1003.8" y1="543.5" x2="1003.8" y2="575.3" stroke="#22d3ee" stroke-width="2"/><line x1="1036.3" y1="543.5" x2="1036.3" y2="575.3" stroke="#22d3ee" stroke-width="2"/><line x1="1068.8" y1="543.5" x2="1068.8" y2="575.3" stroke="#22d3ee" stroke-width="2"/><line x1="1101.3" y1="543.5" x2="1101.3" y2="575.3" stroke="#22d3ee" stroke-width="2"/><line x1="1133.8" y1="543.5" x2="1133.8" y2="575.3" stroke="#22d3ee" stroke-width="2"/><line x1="1166.3" y1="543.5" x2="1166.3" y2="575.3" stroke="#22d3ee" stroke-width="2"/><line x1="1198.8" y1="543.5" x2="1198.8" y2="575.3" stroke="#22d3ee" stroke-width="2"/><line x1="1231.3" y1="543.5" x2="1231.3" y2="575.3" stroke="#22d3ee" stroke-width="2"/><line x1="1263.8" y1="543.5" x2="1263.8" y2="575.3" stroke="#22d3ee" stroke-width="2"/><line x1="1296.3" y1="543.5" x2="1296.3" y2="575.3" stroke="#22d3ee" stroke-width="2"/><line x1="1328.8" y1="543.5" x2="1328.8" y2="575.3" stroke="#22d3ee" stroke-width="2"/><rect x="874" y="1164" width="485.5999999999999" height="38" fill="none" stroke="#3fa9f5" stroke-width="2"/><line x1="905.3" y1="1164" x2="905.3" y2="1202" stroke="#22d3ee" stroke-width="2"/><line x1="937.8" y1="1164" x2="937.8" y2="1202" stroke="#22d3ee" stroke-width="2"/><line x1="970.3" y1="1164" x2="970.3" y2="1202" stroke="#22d3ee" stroke-width="2"/><line x1="1002.8" y1="1164" x2="1002.8" y2="1202" stroke="#22d3ee" stroke-width="2"/><line x1="1035.3" y1="1164" x2="1035.3" y2="1202" stroke="#22d3ee" stroke-width="2"/><line x1="1067.8" y1="1164" x2="1067.8" y2="1202" stroke="#22d3ee" stroke-width="2"/><line x1="1100.3" y1="1164" x2="1100.3" y2="1202" stroke="#22d3ee" stroke-width="2"/><line x1="1132.8" y1="1164" x2="1132.8" y2="1202" stroke="#22d3ee" stroke-width="2"/><line x1="1165.3" y1="1164" x2="1165.3" y2="1202" stroke="#22d3ee" stroke-width="2"/><line x1="1197.8" y1="1164" x2="1197.8" y2="1202" stroke="#22d3ee" stroke-width="2"/><line x1="1230.3" y1="1164" x2="1230.3" y2="1202" stroke="#22d3ee" stroke-width="2"/><line x1="1262.8" y1="1164" x2="1262.8" y2="1202" stroke="#22d3ee" stroke-width="2"/><line x1="1295.3" y1="1164" x2="1295.3" y2="1202" stroke="#22d3ee" stroke-width="2"/><line x1="1327.8" y1="1164" x2="1327.8" y2="1202" stroke="#22d3ee" stroke-width="2"/><rect x="844.5" y="631" width="32.0" height="484" fill="none" stroke="#3fa9f5" stroke-width="2"/><line x1="844.5" y1="663.5" x2="876.5" y2="663.5" stroke="#22d3ee" stroke-width="2"/><line x1="844.5" y1="695.9" x2="876.5" y2="695.9" stroke="#22d3ee" stroke-width="2"/><line x1="844.5" y1="728.3" x2="876.5" y2="728.3" stroke="#22d3ee" stroke-width="2"/><line x1="844.5" y1="760.7" x2="876.5" y2="760.7" stroke="#22d3ee" stroke-width="2"/><line x1="844.5" y1="793.1" x2="876.5" y2="793.1" stroke="#22d3ee" stroke-width="2"/><line x1="844.5" y1="825.5" x2="876.5" y2="825.5" stroke="#22d3ee" stroke-width="2"/><line x1="844.5" y1="857.9" x2="876.5" y2="857.9" stroke="#22d3ee" stroke-width="2"/><line x1="844.5" y1="890.3" x2="876.5" y2="890.3" stroke="#22d3ee" stroke-width="2"/><line x1="844.5" y1="922.7" x2="876.5" y2="922.7" stroke="#22d3ee" stroke-width="2"/><line x1="844.5" y1="955.1" x2="876.5" y2="955.1" stroke="#22d3ee" stroke-width="2"/><line x1="844.5" y1="987.5" x2="876.5" y2="987.5" stroke="#22d3ee" stroke-width="2"/><line x1="844.5" y1="1019.9" x2="876.5" y2="1019.9" stroke="#22d3ee" stroke-width="2"/><line x1="844.5" y1="1052.3" x2="876.5" y2="1052.3" stroke="#22d3ee" stroke-width="2"/><line x1="844.5" y1="1084.7" x2="876.5" y2="1084.7" stroke="#22d3ee" stroke-width="2"/><rect x="1358" y="631" width="32" height="484" fill="none" stroke="#3fa9f5" stroke-width="2"/><line x1="1358" y1="663.5" x2="1390" y2="663.5" stroke="#22d3ee" stroke-width="2"/><line x1="1358" y1="695.9" x2="1390" y2="695.9" stroke="#22d3ee" stroke-width="2"/><line x1="1358" y1="728.3" x2="1390" y2="728.3" stroke="#22d3ee" stroke-width="2"/><line x1="1358" y1="760.7" x2="1390" y2="760.7" stroke="#22d3ee" stroke-width="2"/><line x1="1358" y1="793.1" x2="1390" y2="793.1" stroke="#22d3ee" stroke-width="2"/><line x1="1358" y1="825.5" x2="1390" y2="825.5" stroke="#22d3ee" stroke-width="2"/><line x1="1358" y1="857.9" x2="1390" y2="857.9" stroke="#22d3ee" stroke-width="2"/><line x1="1358" y1="890.3" x2="1390" y2="890.3" stroke="#22d3ee" stroke-width="2"/><line x1="1358" y1="922.7" x2="1390" y2="922.7" stroke="#22d3ee" stroke-width="2"/><line x1="1358" y1="955.1" x2="1390" y2="955.1" stroke="#22d3ee" stroke-width="2"/><line x1="1358" y1="987.5" x2="1390" y2="987.5" stroke="#22d3ee" stroke-width="2"/><line x1="1358" y1="1019.9" x2="1390" y2="1019.9" stroke="#22d3ee" stroke-width="2"/><line x1="1358" y1="1052.3" x2="1390" y2="1052.3" stroke="#22d3ee" stroke-width="2"/><line x1="1358" y1="1084.7" x2="1390" y2="1084.7" stroke="#22d3ee" stroke-width="2"/><rect x="1037" y="794.5" width="56.8" height="58.5" fill="url(#stip)" stroke="#19e619" stroke-width="2.4" stroke-dasharray="8 4"/><rect x="1146" y="794.5" width="56.7" height="58.5" fill="url(#stip)" stroke="#19e619" stroke-width="2.4" stroke-dasharray="8 4"/><rect x="1093.8" y="810" width="52.2" height="28" fill="url(#stip)"/><rect x="1014.5" y="799.4" width="67.5" height="49.6" fill="url(#hatch)" stroke="#3fa9f5" stroke-width="2"/><rect x="1159" y="799.4" width="68.5" height="49.6" fill="url(#hatch)" stroke="#3fa9f5" stroke-width="2"/><rect x="1050.5" y="808.8" width="32" height="29.5" fill="none" stroke="#22d3ee" stroke-width="2"/><rect x="1160" y="808.8" width="30" height="29.5" fill="none" stroke="#22d3ee" stroke-width="2"/><path d="M1093.8 809.5 H1146 M1093.8 838 H1146" stroke="#19e619" stroke-width="2.4" stroke-dasharray="8 4"/><rect x="1107.6" y="873.7" width="25.8" height="123" fill="url(#cross)" stroke="#c9482b" stroke-width="2"/><rect x="1107.6" y="774.7" width="25.8" height="99" fill="url(#dots)" stroke="#9a8f9c" stroke-width="2.2"/><rect x="1091" y="938.8" width="59" height="58.2" fill="url(#cross)"/><rect x="1091" y="938.8" width="59" height="58.2" fill="url(#hatch)" stroke="#3fa9f5" stroke-width="2"/><rect x="1105" y="953" width="31.7" height="31.3" fill="none" stroke="#22d3ee" stroke-width="2"/><rect x="1754" y="858.7" width="59.2" height="58.9" fill="url(#stip)" stroke="#19e619" stroke-width="2.4" stroke-dasharray="8 4"/><rect x="1767" y="863" width="32.5" height="50" fill="url(#hatch)" stroke="#3fa9f5" stroke-width="2"/><line x1="1767" y1="874" x2="1799.5" y2="874" stroke="#22d3ee" stroke-width="2"/><line x1="1767" y1="902" x2="1799.5" y2="902" stroke="#22d3ee" stroke-width="2"/><rect x="1862.6" y="858.7" width="59.2" height="58.9" fill="url(#stip)" stroke="#19e619" stroke-width="2.4" stroke-dasharray="8 4"/><rect x="1876" y="863" width="32.5" height="50" fill="url(#hatch)" stroke="#3fa9f5" stroke-width="2"/><line x1="1876" y1="874" x2="1908.5" y2="874" stroke="#22d3ee" stroke-width="2"/><line x1="1876" y1="902" x2="1908.5" y2="902" stroke="#22d3ee" stroke-width="2"/><rect x="1813.5" y="873" width="49" height="29" fill="url(#stip)"/><rect x="1824.8" y="838.6" width="26.5" height="98.7" fill="url(#dots)" stroke="#9a8f9c" stroke-width="2.2"/><rect x="1526.5" y="433.8" width="26.5" height="25.599999999999966" fill="none" stroke="#e01b1b" stroke-width="2.2"/><path d="M1526.5 433.8 L1553 459.4" stroke="#e01b1b" stroke-width="2"/><rect x="1621.8" y="624.6" width="26.200000000000045" height="25.600000000000023" fill="none" stroke="#3fa9f5" stroke-width="2.2"/><path d="M1621.8 650.2 L1648 624.6" stroke="#3fa9f5" stroke-width="2"/><rect x="1621.8" y="720" width="26.200000000000045" height="25.5" fill="none" stroke="#3fa9f5" stroke-width="2.2"/><path d="M1621.8 745.5 L1648 720" stroke="#3fa9f5" stroke-width="2"/><rect x="1621.8" y="815" width="26.200000000000045" height="26" fill="none" stroke="#3fa9f5" stroke-width="2.2"/><path d="M1621.8 841 L1648 815" stroke="#3fa9f5" stroke-width="2"/><rect x="1621.8" y="1101.3" width="26.200000000000045" height="25.90000000000009" fill="none" stroke="#f6dcb6" stroke-width="2.2"/><path d="M1621.8 1101.3 L1648 1127.2" stroke="#f6dcb6" stroke-width="2"/><path d="M1629.5 1204 L1639.5 1214 M1639.5 1204 L1629.5 1214" stroke="#fff" stroke-width="4.5"/><rect x="835" y="1383.8" width="191.5" height="12.7" fill="none" stroke="#6e6e6e" stroke-width="2.2"/><rect x="834" y="1383" width="97.8" height="14.5" fill="#6e6e6e"/></svg>
<div style="position:absolute;top:519.85px;font:bold 24.6px/24.6px 'Liberation Mono', monospace;color:#fff;white-space:nowrap;left:1088.00px;-webkit-text-stroke:0.7px currentColor;">sub!</div>
<div style="position:absolute;top:861.15px;font:bold 24.6px/24.6px 'Liberation Mono', monospace;color:#fff;white-space:nowrap;left:804.00px;-webkit-text-stroke:0.7px currentColor;">sub!</div>
<div style="position:absolute;top:861.15px;font:bold 24.6px/24.6px 'Liberation Mono', monospace;color:#3fa9f5;white-space:nowrap;left:857.70px;-webkit-text-stroke:0.7px currentColor;">vss</div>
<div style="position:absolute;top:861.15px;font:bold 24.6px/24.6px 'Liberation Mono', monospace;color:#fff;white-space:nowrap;left:1372.80px;-webkit-text-stroke:0.7px currentColor;">sub!</div>
<div style="position:absolute;top:1201.15px;font:bold 24.6px/24.6px 'Liberation Mono', monospace;color:#fff;white-space:nowrap;left:1088.80px;-webkit-text-stroke:0.7px currentColor;">sub!</div>
<div style="position:absolute;top:795.15px;font:bold 24.6px/24.6px 'Liberation Mono', monospace;color:#3fa9f5;white-space:nowrap;left:1067.00px;-webkit-text-stroke:0.7px currentColor;">ndrain</div>
<div style="position:absolute;top:795.15px;font:bold 24.6px/24.6px 'Liberation Mono', monospace;color:#3fa9f5;white-space:nowrap;left:1174.60px;-webkit-text-stroke:0.7px currentColor;">nsource</div>
<div style="position:absolute;top:812.15px;font:bold 24.6px/24.6px 'Liberation Mono', monospace;color:#8d8d9a;white-space:nowrap;left:1091.00px;-webkit-text-stroke:0.7px currentColor;">nmos</div>
<div style="position:absolute;top:941.15px;font:bold 24.6px/24.6px 'Liberation Mono', monospace;color:#3fa9f5;white-space:nowrap;left:1120.00px;-webkit-text-stroke:0.7px currentColor;">ngate</div>
<div style="position:absolute;top:420.15px;font:bold 24.6px/24.6px 'Liberation Mono', monospace;color:#e01b1b;white-space:nowrap;left:1540.00px;-webkit-text-stroke:0.7px currentColor;">pin_name</div>
<div style="position:absolute;top:609.55px;font:bold 24.6px/24.6px 'Liberation Mono', monospace;color:#3fa9f5;white-space:nowrap;left:1635.60px;-webkit-text-stroke:0.7px currentColor;">pin_name</div>
<div style="position:absolute;top:704.15px;font:bold 24.6px/24.6px 'Liberation Mono', monospace;color:#3fa9f5;white-space:nowrap;left:1635.60px;-webkit-text-stroke:0.7px currentColor;">pin_name</div>
<div style="position:absolute;top:801.15px;font:bold 24.6px/24.6px 'Liberation Mono', monospace;color:#3fa9f5;white-space:nowrap;left:1635.60px;-webkit-text-stroke:0.7px currentColor;">pin_name</div>
<div style="position:absolute;top:1087.15px;font:bold 24.6px/24.6px 'Liberation Mono', monospace;color:#f8dfbb;white-space:nowrap;left:1635.60px;-webkit-text-stroke:0.7px currentColor;">pin_name</div>
<div style="position:absolute;top:1358.38px;font:normal 23px/23px 'Liberation Mono', monospace;color:#707070;white-space:nowrap;left:966.00px;">1 µm</div>
<div style="position:absolute;left:1841.6px;top:888px;transform:translate(-50%,-50%) rotate(-90deg);font:bold 24.6px/24.6px 'Liberation Mono', monospace;color:#fff;white-space:nowrap;">nmos</div>
<div style="position:absolute;left:1949.00px;top:251.00px;width:669.00px;height:1177.00px;background:#ececec;"></div>
<div style="position:absolute;left:1947.00px;top:251.00px;width:2.00px;height:1177.00px;background:#c4c4c4;"></div>
<div style="position:absolute;left:2616.00px;top:251.00px;width:2.00px;height:1177.00px;background:#c8c8c8;"></div>
<div style="position:absolute;left:1949.00px;top:251.00px;width:668.00px;height:45.00px;background:linear-gradient(#ececec,#dedede);border-bottom:2px solid #c3c3c3;box-sizing:border-box;"></div>
<svg style="position:absolute;left:1952px;top:257.5px;" width="30" height="30" viewBox="0 0 30 30"><circle cx="15" cy="15" r="13.5" fill="#454545" stroke="#6c6c6c" stroke-width="1.6"/><path d="M10 10 L20 20 M20 10 L10 20" stroke="#fff" stroke-width="3.6"/></svg>
<svg style="position:absolute;left:1988px;top:257.5px;" width="30" height="30" viewBox="0 0 30 30"><circle cx="15" cy="15" r="14" fill="#474747" stroke="#666" stroke-width="1"/><path d="M11 10 L11 7 L22 7 L22 16.5 L18.5 16.5" fill="none" stroke="#fff" stroke-width="2.2"/><rect x="7" y="12" width="11" height="10" fill="none" stroke="#fff" stroke-width="2.6"/></svg>
<div style="position:absolute;top:262.19px;font:normal 23.4px/23.4px 'Liberation Sans', sans-serif;color:#262626;white-space:nowrap;left:2319.00px;transform:translateX(-50%);">Layers</div>
<div style="position:absolute;left:1950.00px;top:296.00px;width:667.00px;height:466.00px;background:#000;border:2px solid #d8d8d8;border-bottom:none;box-sizing:border-box;"></div>
<svg width="0" height="0" style="position:absolute"><defs><pattern id="sdots" patternUnits="userSpaceOnUse" width="4" height="4"><rect x="0.5" y="0.5" width="1.6" height="1.6" fill="#2a0a04"/><rect x="2.5" y="2.5" width="1.6" height="1.6" fill="#2a0a04"/></pattern></defs></svg>
<svg style="position:absolute;left:1962px;top:300.7px;" width="64" height="31" viewBox="0 0 64 31"><rect x="1.5" y="1.5" width="61" height="28" fill="#000" stroke="#fff" stroke-width="2.6"/></svg>
<div style="position:absolute;top:302.38px;font:bold 27.9px/27.9px 'Liberation Sans', sans-serif;color:#fff;white-space:nowrap;left:2042.30px;">Substrate.drawing - 40/0</div>
<svg style="position:absolute;left:1962px;top:336.7px;" width="64" height="31" viewBox="0 0 64 31"><rect x="0" y="0" width="64" height="31" fill="#000"/><rect x="3.2" y="4.1" width="1.8" height="1.8" fill="#22d022"/><rect x="9.4" y="4.3" width="1.8" height="1.8" fill="#22d022"/><rect x="16.0" y="2.7" width="1.8" height="1.8" fill="#22d022"/><rect x="19.9" y="5.0" width="1.8" height="1.8" fill="#22d022"/><rect x="26.5" y="3.2" width="1.8" height="1.8" fill="#22d022"/><rect x="34.5" y="3.9" width="1.8" height="1.8" fill="#22d022"/><rect x="39.8" y="3.9" width="1.8" height="1.8" fill="#22d022"/><rect x="45.0" y="3.0" width="1.8" height="1.8" fill="#22d022"/><rect x="50.8" y="5.1" width="1.8" height="1.8" fill="#22d022"/><rect x="56.3" y="4.7" width="1.8" height="1.8" fill="#22d022"/><rect x="4.5" y="8.9" width="1.8" height="1.8" fill="#22d022"/><rect x="10.6" y="10.5" width="1.8" height="1.8" fill="#22d022"/><rect x="15.0" y="8.8" width="1.8" height="1.8" fill="#22d022"/><rect x="22.5" y="10.1" width="1.8" height="1.8" fill="#22d022"/><rect x="27.9" y="11.3" width="1.8" height="1.8" fill="#22d022"/><rect x="33.6" y="11.5" width="1.8" height="1.8" fill="#22d022"/><rect x="38.5" y="11.1" width="1.8" height="1.8" fill="#22d022"/><rect x="44.4" y="11.5" width="1.8" height="1.8" fill="#22d022"/><rect x="51.5" y="9.0" width="1.8" height="1.8" fill="#22d022"/><rect x="55.1" y="9.4" width="1.8" height="1.8" fill="#22d022"/><rect x="5.4" y="16.2" width="1.8" height="1.8" fill="#22d022"/><rect x="10.2" y="15.8" width="1.8" height="1.8" fill="#22d022"/><rect x="15.6" y="16.1" width="1.8" height="1.8" fill="#22d022"/><rect x="21.0" y="16.7" width="1.8" height="1.8" fill="#22d022"/><rect x="27.5" y="17.6" width="1.8" height="1.8" fill="#22d022"/><rect x="33.5" y="17.7" width="1.8" height="1.8" fill="#22d022"/><rect x="39.9" y="17.9" width="1.8" height="1.8" fill="#22d022"/><rect x="45.1" y="15.4" width="1.8" height="1.8" fill="#22d022"/><rect x="51.5" y="17.8" width="1.8" height="1.8" fill="#22d022"/><rect x="57.4" y="16.6" width="1.8" height="1.8" fill="#22d022"/><rect x="4.6" y="21.7" width="1.8" height="1.8" fill="#22d022"/><rect x="10.8" y="22.8" width="1.8" height="1.8" fill="#22d022"/><rect x="15.0" y="21.3" width="1.8" height="1.8" fill="#22d022"/><rect x="22.5" y="24.1" width="1.8" height="1.8" fill="#22d022"/><rect x="26.0" y="23.5" width="1.8" height="1.8" fill="#22d022"/><rect x="32.7" y="21.6" width="1.8" height="1.8" fill="#22d022"/><rect x="38.2" y="23.4" width="1.8" height="1.8" fill="#22d022"/><rect x="45.7" y="21.2" width="1.8" height="1.8" fill="#22d022"/><rect x="50.7" y="21.2" width="1.8" height="1.8" fill="#22d022"/><rect x="56.9" y="22.1" width="1.8" height="1.8" fill="#22d022"/><rect x="1.5" y="1.5" width="61" height="28" fill="none" stroke="#19e619" stroke-width="2.6" stroke-dasharray="7 3"/></svg>
<div style="position:absolute;top:338.38px;font:bold 27.9px/27.9px 'Liberation Sans', sans-serif;color:#fff;white-space:nowrap;left:2042.30px;">Activ.drawing - 1/0</div>
<svg style="position:absolute;left:1962px;top:372.7px;" width="64" height="31" viewBox="0 0 64 31"><rect x="0" y="0" width="64" height="31" fill="#000"/><path d="M6 2 L6 10 M2 6 L10 6" stroke="#c9482b" stroke-width="1.8"/><path d="M17 2 L17 10 M13 6 L21 6" stroke="#c9482b" stroke-width="1.8"/><path d="M28 2 L28 10 M24 6 L32 6" stroke="#c9482b" stroke-width="1.8"/><path d="M39 2 L39 10 M35 6 L43 6" stroke="#c9482b" stroke-width="1.8"/><path d="M50 2 L50 10 M46 6 L54 6" stroke="#c9482b" stroke-width="1.8"/><path d="M61 2 L61 10 M57 6 L65 6" stroke="#c9482b" stroke-width="1.8"/><path d="M11 11.5 L11 19.5 M7 15.5 L15 15.5" stroke="#c9482b" stroke-width="1.8"/><path d="M22 11.5 L22 19.5 M18 15.5 L26 15.5" stroke="#c9482b" stroke-width="1.8"/><path d="M33 11.5 L33 19.5 M29 15.5 L37 15.5" stroke="#c9482b" stroke-width="1.8"/><path d="M44 11.5 L44 19.5 M40 15.5 L48 15.5" stroke="#c9482b" stroke-width="1.8"/><path d="M55 11.5 L55 19.5 M51 15.5 L59 15.5" stroke="#c9482b" stroke-width="1.8"/><path d="M6 21 L6 29 M2 25 L10 25" stroke="#c9482b" stroke-width="1.8"/><path d="M17 21 L17 29 M13 25 L21 25" stroke="#c9482b" stroke-width="1.8"/><path d="M28 21 L28 29 M24 25 L32 25" stroke="#c9482b" stroke-width="1.8"/><path d="M39 21 L39 29 M35 25 L43 25" stroke="#c9482b" stroke-width="1.8"/><path d="M50 21 L50 29 M46 25 L54 25" stroke="#c9482b" stroke-width="1.8"/><path d="M61 21 L61 29 M57 25 L65 25" stroke="#c9482b" stroke-width="1.8"/><rect x="1.5" y="1.5" width="61" height="28" fill="none" stroke="#c9482b" stroke-width="2.6"/></svg>
<div style="position:absolute;top:374.38px;font:bold 27.9px/27.9px 'Liberation Sans', sans-serif;color:#fff;white-space:nowrap;left:2042.30px;">GatPoly.drawing - 5/0</div>
<svg style="position:absolute;left:1962px;top:408.7px;" width="64" height="31" viewBox="0 0 64 31"><rect x="0" y="0" width="64" height="31" fill="#c9482b"/><rect x="0" y="0" width="64" height="31" fill="url(#sdots)"/><rect x="1.5" y="1.5" width="61" height="28" fill="none" stroke="#c9482b" stroke-width="2.6"/></svg>
<div style="position:absolute;top:410.38px;font:bold 27.9px/27.9px 'Liberation Sans', sans-serif;color:#fff;white-space:nowrap;left:2042.30px;">GatPoly.pin - 5/2</div>
<svg style="position:absolute;left:1962px;top:444.7px;" width="64" height="31" viewBox="0 0 64 31"><rect x="0" y="0" width="64" height="31" fill="#000"/><rect x="38.5" y="20.8" width="1.8" height="1.8" fill="#d9c3a3"/><rect x="48.3" y="25.6" width="1.8" height="1.8" fill="#d9c3a3"/><rect x="45.2" y="25.1" width="1.8" height="1.8" fill="#d9c3a3"/><rect x="4.7" y="14.2" width="1.8" height="1.8" fill="#d9c3a3"/><rect x="56.8" y="18.6" width="1.8" height="1.8" fill="#d9c3a3"/><rect x="54.4" y="5.7" width="1.8" height="1.8" fill="#d9c3a3"/><rect x="29.7" y="8.9" width="1.8" height="1.8" fill="#d9c3a3"/><rect x="34.0" y="16.8" width="1.8" height="1.8" fill="#d9c3a3"/><rect x="3.7" y="8.2" width="1.8" height="1.8" fill="#d9c3a3"/><rect x="18.9" y="25.0" width="1.8" height="1.8" fill="#d9c3a3"/><rect x="46.6" y="6.8" width="1.8" height="1.8" fill="#d9c3a3"/><rect x="48.4" y="6.3" width="1.8" height="1.8" fill="#d9c3a3"/><rect x="38.2" y="6.0" width="1.8" height="1.8" fill="#d9c3a3"/><rect x="3.1" y="23.9" width="1.8" height="1.8" fill="#d9c3a3"/><rect x="14.9" y="8.2" width="1.8" height="1.8" fill="#d9c3a3"/><rect x="59.0" y="23.9" width="1.8" height="1.8" fill="#d9c3a3"/><rect x="19.5" y="26.1" width="1.8" height="1.8" fill="#d9c3a3"/><rect x="33.7" y="19.3" width="1.8" height="1.8" fill="#d9c3a3"/><rect x="14.7" y="25.6" width="1.8" height="1.8" fill="#d9c3a3"/><rect x="42.4" y="26.2" width="1.8" height="1.8" fill="#d9c3a3"/><rect x="53.9" y="10.2" width="1.8" height="1.8" fill="#d9c3a3"/><rect x="23.6" y="7.0" width="1.8" height="1.8" fill="#d9c3a3"/><rect x="11.3" y="4.6" width="1.8" height="1.8" fill="#d9c3a3"/><rect x="20.2" y="17.5" width="1.8" height="1.8" fill="#d9c3a3"/><rect x="3.2" y="19.3" width="1.8" height="1.8" fill="#d9c3a3"/><rect x="22.3" y="10.4" width="1.8" height="1.8" fill="#d9c3a3"/><rect x="49.7" y="14.5" width="1.8" height="1.8" fill="#d9c3a3"/><rect x="21.0" y="14.5" width="1.8" height="1.8" fill="#d9c3a3"/><rect x="43.2" y="4.4" width="1.8" height="1.8" fill="#d9c3a3"/><rect x="58.6" y="3.5" width="1.8" height="1.8" fill="#d9c3a3"/><rect x="45.7" y="23.3" width="1.8" height="1.8" fill="#d9c3a3"/><rect x="4.0" y="21.9" width="1.8" height="1.8" fill="#d9c3a3"/><rect x="23.9" y="16.9" width="1.8" height="1.8" fill="#d9c3a3"/><rect x="3.5" y="4.1" width="1.8" height="1.8" fill="#d9c3a3"/><rect x="13.3" y="25.9" width="1.8" height="1.8" fill="#d9c3a3"/><rect x="14.2" y="21.1" width="1.8" height="1.8" fill="#d9c3a3"/><rect x="56.0" y="25.6" width="1.8" height="1.8" fill="#d9c3a3"/><rect x="22.6" y="11.5" width="1.8" height="1.8" fill="#d9c3a3"/><rect x="32.9" y="21.6" width="1.8" height="1.8" fill="#d9c3a3"/><rect x="9.2" y="21.0" width="1.8" height="1.8" fill="#d9c3a3"/><rect x="48.4" y="23.6" width="1.8" height="1.8" fill="#d9c3a3"/><rect x="5.1" y="25.7" width="1.8" height="1.8" fill="#d9c3a3"/><rect x="8.2" y="11.2" width="1.8" height="1.8" fill="#d9c3a3"/><rect x="37.8" y="25.0" width="1.8" height="1.8" fill="#d9c3a3"/><rect x="22.4" y="25.2" width="1.8" height="1.8" fill="#d9c3a3"/><rect x="34.1" y="10.5" width="1.8" height="1.8" fill="#d9c3a3"/><rect x="21.1" y="7.3" width="1.8" height="1.8" fill="#d9c3a3"/><rect x="7.5" y="6.6" width="1.8" height="1.8" fill="#d9c3a3"/><rect x="42.3" y="26.9" width="1.8" height="1.8" fill="#d9c3a3"/><rect x="12.2" y="4.2" width="1.8" height="1.8" fill="#d9c3a3"/><rect x="59.2" y="15.8" width="1.8" height="1.8" fill="#d9c3a3"/><rect x="26.1" y="8.7" width="1.8" height="1.8" fill="#d9c3a3"/><rect x="36.9" y="22.8" width="1.8" height="1.8" fill="#d9c3a3"/><rect x="29.0" y="13.1" width="1.8" height="1.8" fill="#d9c3a3"/><rect x="6.2" y="25.0" width="1.8" height="1.8" fill="#d9c3a3"/><rect x="4.9" y="14.8" width="1.8" height="1.8" fill="#d9c3a3"/><rect x="50.8" y="6.1" width="1.8" height="1.8" fill="#d9c3a3"/><rect x="44.7" y="25.8" width="1.8" height="1.8" fill="#d9c3a3"/><rect x="38.9" y="21.9" width="1.8" height="1.8" fill="#d9c3a3"/><rect x="9.1" y="13.4" width="1.8" height="1.8" fill="#d9c3a3"/><rect x="1.5" y="1.5" width="61" height="28" fill="none" stroke="#d9c3a3" stroke-width="2.6"/></svg>
<div style="position:absolute;top:446.38px;font:bold 27.9px/27.9px 'Liberation Sans', sans-serif;color:#fff;white-space:nowrap;left:2042.30px;">pSD.drawing - 14/0</div>
<svg style="position:absolute;left:1962px;top:480.7px;" width="64" height="31" viewBox="0 0 64 31"><rect x="0" y="0" width="64" height="31" fill="#000"/><path d="M-21.5 31 L9.5 0" stroke="#22d3ee" stroke-width="2"/><path d="M0.0 31 L31.0 0" stroke="#22d3ee" stroke-width="2"/><path d="M21.5 31 L52.5 0" stroke="#22d3ee" stroke-width="2"/><path d="M43.0 31 L74.0 0" stroke="#22d3ee" stroke-width="2"/><path d="M64.5 31 L95.5 0" stroke="#22d3ee" stroke-width="2"/><path d="M86.0 31 L117.0 0" stroke="#22d3ee" stroke-width="2"/><rect x="1.5" y="1.5" width="61" height="28" fill="none" stroke="#22d3ee" stroke-width="2.6"/></svg>
<div style="position:absolute;top:482.38px;font:bold 27.9px/27.9px 'Liberation Sans', sans-serif;color:#fff;white-space:nowrap;left:2042.30px;">Cont.drawing - 6/0</div>
<svg style="position:absolute;left:1962px;top:516.7px;" width="64" height="31" viewBox="0 0 64 31"><rect x="0" y="0" width="64" height="31" fill="#000"/><path d="M-21.5 31 L9.5 0" stroke="#3fa9f5" stroke-width="2"/><path d="M0.0 31 L31.0 0" stroke="#3fa9f5" stroke-width="2"/><path d="M21.5 31 L52.5 0" stroke="#3fa9f5" stroke-width="2"/><path d="M43.0 31 L74.0 0" stroke="#3fa9f5" stroke-width="2"/><path d="M64.5 31 L95.5 0" stroke="#3fa9f5" stroke-width="2"/><path d="M86.0 31 L117.0 0" stroke="#3fa9f5" stroke-width="2"/><rect x="1.5" y="1.5" width="61" height="28" fill="none" stroke="#3fa9f5" stroke-width="2.6"/></svg>
<div style="position:absolute;top:518.38px;font:bold 27.9px/27.9px 'Liberation Sans', sans-serif;color:#fff;white-space:nowrap;left:2042.30px;">Metal1.drawing - 8/0</div>
<svg style="position:absolute;left:1962px;top:552.7px;" width="64" height="31" viewBox="0 0 64 31"><rect x="0" y="0" width="64" height="31" fill="#000"/><path d="M-21.5 31 L9.5 0" stroke="#3fa9f5" stroke-width="2"/><path d="M0.0 31 L31.0 0" stroke="#3fa9f5" stroke-width="2"/><path d="M21.5 31 L52.5 0" stroke="#3fa9f5" stroke-width="2"/><path d="M43.0 31 L74.0 0" stroke="#3fa9f5" stroke-width="2"/><path d="M64.5 31 L95.5 0" stroke="#3fa9f5" stroke-width="2"/><path d="M86.0 31 L117.0 0" stroke="#3fa9f5" stroke-width="2"/><rect x="1.5" y="1.5" width="61" height="28" fill="none" stroke="#3fa9f5" stroke-width="2.6"/></svg>
<div style="position:absolute;top:554.38px;font:bold 27.9px/27.9px 'Liberation Sans', sans-serif;color:#fff;white-space:nowrap;left:2042.30px;">Metal1.pin - 8/2</div>
<svg style="position:absolute;left:1962px;top:588.7px;" width="64" height="31" viewBox="0 0 64 31"><rect x="0" y="0" width="64" height="31" fill="#000"/><path d="M-21.5 31 L9.5 0" stroke="#3fa9f5" stroke-width="2"/><path d="M0.0 31 L31.0 0" stroke="#3fa9f5" stroke-width="2"/><path d="M21.5 31 L52.5 0" stroke="#3fa9f5" stroke-width="2"/><path d="M43.0 31 L74.0 0" stroke="#3fa9f5" stroke-width="2"/><path d="M64.5 31 L95.5 0" stroke="#3fa9f5" stroke-width="2"/><path d="M86.0 31 L117.0 0" stroke="#3fa9f5" stroke-width="2"/><rect x="1.5" y="1.5" width="61" height="28" fill="none" stroke="#3fa9f5" stroke-width="2.6"/></svg>
<div style="position:absolute;top:590.38px;font:bold 27.9px/27.9px 'Liberation Sans', sans-serif;color:#fff;white-space:nowrap;left:2042.30px;">Metal1.text - 8/25</div>
<svg style="position:absolute;left:1962px;top:624.7px;" width="64" height="31" viewBox="0 0 64 31"><rect x="0" y="0" width="64" height="31" fill="#000"/><path d="M-21.5 0 L9.5 31" stroke="#e01b1b" stroke-width="2"/><path d="M0.0 0 L31.0 31" stroke="#e01b1b" stroke-width="2"/><path d="M21.5 0 L52.5 31" stroke="#e01b1b" stroke-width="2"/><path d="M43.0 0 L74.0 31" stroke="#e01b1b" stroke-width="2"/><path d="M64.5 0 L95.5 31" stroke="#e01b1b" stroke-width="2"/><path d="M86.0 0 L117.0 31" stroke="#e01b1b" stroke-width="2"/><rect x="1.5" y="1.5" width="61" height="28" fill="none" stroke="#e01b1b" stroke-width="2.6"/></svg>
<div style="position:absolute;top:626.38px;font:bold 27.9px/27.9px 'Liberation Sans', sans-serif;color:#fff;white-space:nowrap;left:2042.30px;">Metal3.pin - 30/2</div>
<svg style="position:absolute;left:1962px;top:660.7px;" width="64" height="31" viewBox="0 0 64 31"><rect x="0" y="0" width="64" height="31" fill="#000"/><path d="M-21.5 0 L9.5 31" stroke="#e01b1b" stroke-width="2"/><path d="M0.0 0 L31.0 31" stroke="#e01b1b" stroke-width="2"/><path d="M21.5 0 L52.5 31" stroke="#e01b1b" stroke-width="2"/><path d="M43.0 0 L74.0 31" stroke="#e01b1b" stroke-width="2"/><path d="M64.5 0 L95.5 31" stroke="#e01b1b" stroke-width="2"/><path d="M86.0 0 L117.0 31" stroke="#e01b1b" stroke-width="2"/><rect x="1.5" y="1.5" width="61" height="28" fill="none" stroke="#e01b1b" stroke-width="2.6"/></svg>
<div style="position:absolute;top:662.38px;font:bold 27.9px/27.9px 'Liberation Sans', sans-serif;color:#fff;white-space:nowrap;left:2042.30px;">Metal3.text - 30/25</div>
<svg style="position:absolute;left:1962px;top:696.7px;" width="64" height="31" viewBox="0 0 64 31"><rect x="0" y="0" width="64" height="31" fill="#000"/><path d="M-21.5 0 L9.5 31" stroke="#f8dcb4" stroke-width="2"/><path d="M0.0 0 L31.0 31" stroke="#f8dcb4" stroke-width="2"/><path d="M21.5 0 L52.5 31" stroke="#f8dcb4" stroke-width="2"/><path d="M43.0 0 L74.0 31" stroke="#f8dcb4" stroke-width="2"/><path d="M64.5 0 L95.5 31" stroke="#f8dcb4" stroke-width="2"/><path d="M86.0 0 L117.0 31" stroke="#f8dcb4" stroke-width="2"/><rect x="1.5" y="1.5" width="61" height="28" fill="none" stroke="#f8dcb4" stroke-width="2.6"/></svg>
<div style="position:absolute;top:698.38px;font:bold 27.9px/27.9px 'Liberation Sans', sans-serif;color:#fff;white-space:nowrap;left:2042.30px;">TopMetal1.pin - 126/2</div>
<svg style="position:absolute;left:1962px;top:732.7px;" width="64" height="31" viewBox="0 0 64 31"><rect x="1.5" y="1.5" width="61" height="40" fill="#000" stroke="#f8dcb4" stroke-width="2.6"/></svg>
<div style="position:absolute;top:734.38px;font:bold 27.9px/27.9px 'Liberation Sans', sans-serif;color:#fff;white-space:nowrap;left:2042.30px;">TopMetal1.text - 126/25</div>
<div style="position:absolute;left:1950.00px;top:761.00px;width:667.00px;height:2.00px;background:#d8d8d8;"></div>
<div style="position:absolute;left:2594.00px;top:304.00px;width:16.00px;height:383.00px;background:#5e5e5e;border-radius:8px;"></div>
<div style="position:absolute;left:1949.00px;top:763.00px;width:668.00px;height:51.00px;background:#ececec;"></div>
<div style="position:absolute;left:1950.00px;top:763.00px;width:51.00px;height:51.00px;background:linear-gradient(#f4f4f4,#ececec);border:2.5px solid #b6b6b6;box-sizing:border-box;"></div>
<svg style="position:absolute;left:1951px;top:764px;" width="49" height="49" viewBox="0 0 49 49"><path d="M17 12 L31 12 L31 20 L38 20 L24 34 L10 20 L17 20 Z" fill="#333"/><path d="M12 38 L36 38" stroke="#333" stroke-width="2.2"/></svg>
<div style="position:absolute;left:2003.00px;top:763.00px;width:51.00px;height:51.00px;background:linear-gradient(#f4f4f4,#ececec);border:2.5px solid #b6b6b6;box-sizing:border-box;"></div>
<svg style="position:absolute;left:2004px;top:764px;" width="49" height="49" viewBox="0 0 49 49"><path d="M17 10 L31 10 L31 19 L38 19 L24 33 L10 19 L17 19 Z" fill="#333"/></svg>
<div style="position:absolute;left:2055.00px;top:763.00px;width:51.00px;height:51.00px;background:linear-gradient(#f4f4f4,#ececec);border:2.5px solid #b6b6b6;box-sizing:border-box;"></div>
<svg style="position:absolute;left:2056px;top:764px;" width="49" height="49" viewBox="0 0 49 49"><path d="M17 37 L31 37 L31 27 L38 27 L24 13 L10 27 L17 27 Z" fill="#333"/></svg>
<div style="position:absolute;left:2107.00px;top:763.00px;width:51.00px;height:51.00px;background:linear-gradient(#f4f4f4,#ececec);border:2.5px solid #b6b6b6;box-sizing:border-box;"></div>
<svg style="position:absolute;left:2108px;top:764px;" width="49" height="49" viewBox="0 0 49 49"><path d="M17 37 L31 37 L31 28 L38 28 L24 14 L10 28 L17 28 Z" fill="#333"/><path d="M12 9.5 L36 9.5" stroke="#333" stroke-width="2.2"/></svg>
<div style="position:absolute;left:1949.00px;top:812.00px;width:668.00px;height:3.00px;background:#c6c6c6;"></div>
<div style="position:absolute;left:1949.00px;top:814.00px;width:668.00px;height:45.00px;background:linear-gradient(#ececec,#dedede);border-bottom:2px solid #c3c3c3;box-sizing:border-box;"></div>
<svg style="position:absolute;left:1952px;top:820.5px;" width="30" height="30" viewBox="0 0 30 30"><circle cx="15" cy="15" r="13.5" fill="#454545" stroke="#6c6c6c" stroke-width="1.6"/><path d="M10 10 L20 20 M20 10 L10 20" stroke="#fff" stroke-width="3.6"/></svg>
<svg style="position:absolute;left:1988px;top:820.5px;" width="30" height="30" viewBox="0 0 30 30"><circle cx="15" cy="15" r="14" fill="#474747" stroke="#666" stroke-width="1"/><path d="M11 10 L11 7 L22 7 L22 16.5 L18.5 16.5" fill="none" stroke="#fff" stroke-width="2.2"/><rect x="7" y="12" width="11" height="10" fill="none" stroke="#fff" stroke-width="2.6"/></svg>
<div style="position:absolute;top:826.19px;font:normal 23.4px/23.4px 'Liberation Sans', sans-serif;color:#262626;white-space:nowrap;left:2319.00px;transform:translateX(-50%);">Layer Toolbox</div>
<div style="position:absolute;left:1951.00px;top:862.00px;width:666.00px;height:33.00px;background:#b4d7fd;"></div>
<div style="position:absolute;left:1951.00px;top:895.00px;width:666.00px;height:1.50px;background:#c9c9c9;"></div>
<div style="position:absolute;left:1951.00px;top:896.50px;width:666.00px;height:1.50px;background:#f6f6f6;"></div>
<div style="position:absolute;left:1956.60px;top:864.70px;width:26.40px;height:26.30px;background:#fff;border-radius:6px;box-shadow:0 0 0 1px #d8e6f5;"></div>
<div style="position:absolute;top:865.35px;font:normal 26.4px/26.4px 'Liberation Sans', sans-serif;color:#111;white-space:nowrap;left:1992.00px;">Color</div>
<div style="position:absolute;left:1951.00px;top:898.00px;width:666.00px;height:33.00px;background:#b4d7fd;"></div>
<div style="position:absolute;left:1951.00px;top:931.00px;width:666.00px;height:1.50px;background:#c9c9c9;"></div>
<div style="position:absolute;left:1951.00px;top:932.50px;width:666.00px;height:1.50px;background:#f6f6f6;"></div>
<div style="position:absolute;left:1956.60px;top:900.70px;width:26.40px;height:26.30px;background:#fff;border-radius:6px;box-shadow:0 0 0 1px #d8e6f5;"></div>
<div style="position:absolute;top:901.35px;font:normal 26.4px/26.4px 'Liberation Sans', sans-serif;color:#111;white-space:nowrap;left:1992.00px;">Frame color</div>
<div style="position:absolute;left:1951.00px;top:934.00px;width:666.00px;height:33.00px;background:#b4d7fd;"></div>
<div style="position:absolute;left:1951.00px;top:967.00px;width:666.00px;height:1.50px;background:#c9c9c9;"></div>
<div style="position:absolute;left:1951.00px;top:968.50px;width:666.00px;height:1.50px;background:#f6f6f6;"></div>
<div style="position:absolute;left:1956.60px;top:936.70px;width:26.40px;height:26.30px;background:#fff;border-radius:6px;box-shadow:0 0 0 1px #d8e6f5;"></div>
<div style="position:absolute;top:937.35px;font:normal 26.4px/26.4px 'Liberation Sans', sans-serif;color:#111;white-space:nowrap;left:1992.00px;">Stipple</div>
<div style="position:absolute;left:1951.00px;top:970.00px;width:666.00px;height:33.00px;background:#b4d7fd;"></div>
<div style="position:absolute;left:1951.00px;top:1003.00px;width:666.00px;height:1.50px;background:#c9c9c9;"></div>
<div style="position:absolute;left:1951.00px;top:1004.50px;width:666.00px;height:1.50px;background:#f6f6f6;"></div>
<div style="position:absolute;left:1956.60px;top:972.70px;width:26.40px;height:26.30px;background:#fff;border-radius:6px;box-shadow:0 0 0 1px #d8e6f5;"></div>
<div style="position:absolute;top:973.35px;font:normal 26.4px/26.4px 'Liberation Sans', sans-serif;color:#111;white-space:nowrap;left:1992.00px;">Animation</div>
<div style="position:absolute;left:1951.00px;top:1006.00px;width:666.00px;height:33.00px;background:#b4d7fd;"></div>
<div style="position:absolute;left:1951.00px;top:1039.00px;width:666.00px;height:1.50px;background:#c9c9c9;"></div>
<div style="position:absolute;left:1951.00px;top:1040.50px;width:666.00px;height:1.50px;background:#f6f6f6;"></div>
<div style="position:absolute;left:1956.60px;top:1008.70px;width:26.40px;height:26.30px;background:#fff;border-radius:6px;box-shadow:0 0 0 1px #d8e6f5;"></div>
<div style="position:absolute;top:1009.35px;font:normal 26.4px/26.4px 'Liberation Sans', sans-serif;color:#111;white-space:nowrap;left:1992.00px;">Style</div>
<div style="position:absolute;left:1951.00px;top:1042.00px;width:666.00px;height:33.00px;background:#b4d7fd;"></div>
<div style="position:absolute;left:1951.00px;top:1075.00px;width:666.00px;height:1.50px;background:#c9c9c9;"></div>
<div style="position:absolute;left:1951.00px;top:1076.50px;width:666.00px;height:1.50px;background:#f6f6f6;"></div>
<div style="position:absolute;left:1956.60px;top:1044.70px;width:26.40px;height:26.30px;background:#fff;border-radius:6px;box-shadow:0 0 0 1px #d8e6f5;"></div>
<div style="position:absolute;top:1045.35px;font:normal 26.4px/26.4px 'Liberation Sans', sans-serif;color:#111;white-space:nowrap;left:1992.00px;">Visibility</div>
<div style="position:absolute;left:1949.00px;top:1076.00px;width:668.00px;height:45.00px;background:linear-gradient(#ececec,#dedede);border-bottom:2px solid #c3c3c3;box-sizing:border-box;"></div>
<svg style="position:absolute;left:1952px;top:1082.5px;" width="30" height="30" viewBox="0 0 30 30"><circle cx="15" cy="15" r="13.5" fill="#454545" stroke="#6c6c6c" stroke-width="1.6"/><path d="M10 10 L20 20 M20 10 L10 20" stroke="#fff" stroke-width="3.6"/></svg>
<svg style="position:absolute;left:1988px;top:1082.5px;" width="30" height="30" viewBox="0 0 30 30"><circle cx="15" cy="15" r="14" fill="#474747" stroke="#666" stroke-width="1"/><path d="M11 10 L11 7 L22 7 L22 16.5 L18.5 16.5" fill="none" stroke="#fff" stroke-width="2.2"/><rect x="7" y="12" width="11" height="10" fill="none" stroke="#fff" stroke-width="2.6"/></svg>
<div style="position:absolute;top:1087.19px;font:normal 23.4px/23.4px 'Liberation Sans', sans-serif;color:#262626;white-space:nowrap;left:2319.00px;transform:translateX(-50%);">Pin Tool</div>
<div style="position:absolute;top:1158.69px;font:normal 26.7px/26.7px 'Liberation Sans', sans-serif;color:#111;white-space:nowrap;left:1974.00px;text-decoration:underline;text-underline-offset:4px;text-decoration-thickness:1.5px;">Layer:</div>
<div style="position:absolute;left:2221.70px;top:1150.80px;width:302.30px;height:40.20px;background:#fff;border-radius:9px;box-shadow:0 0.5px 2px rgba(0,0,0,0.35), 0 0 0 0.5px rgba(0,0,0,0.12);"></div>
<div style="position:absolute;top:1157.91px;font:normal 26.7px/26.7px 'Liberation Sans', sans-serif;color:#111;white-space:nowrap;left:2237.70px;">TopMetal1</div>
<div style="position:absolute;left:2488.00px;top:1154.80px;width:32.00px;height:32.20px;background:linear-gradient(#3d95ff,#0a6cf0);border-radius:7px;"></div>
<svg style="position:absolute;left:2488px;top:1154.8px;" width="32" height="32.200000000000045" viewBox="0 0 32 32.200000000000045"><path d="M10 13.100000000000023 L16 7.100000000000023 L22 13.100000000000023 M10 19.100000000000023 L16 25.100000000000023 L22 19.100000000000023" fill="none" stroke="#fff" stroke-width="2.6" stroke-linecap="round" stroke-linejoin="round"/></svg>
<div style="position:absolute;left:2555.00px;top:1156.50px;width:32.00px;height:32.00px;background:linear-gradient(#5ad33a,#149d10);border-radius:6px;"></div>
<svg style="position:absolute;left:2555px;top:1156.5px;" width="32" height="32" viewBox="0 0 32 32"><path d="M7 16 L14 24 L26 7" fill="none" stroke="#fff" stroke-width="4.2" stroke-linecap="round" stroke-linejoin="round"/></svg>
<div style="position:absolute;top:1214.19px;font:normal 26.7px/26.7px 'Liberation Sans', sans-serif;color:#111;white-space:nowrap;left:1974.00px;text-decoration:underline;text-underline-offset:4px;text-decoration-thickness:1.5px;">Pin:</div>
<div style="position:absolute;left:2217.50px;top:1209.60px;width:312.50px;height:38.40px;background:#fff;box-shadow:0 0 0 1px #d6d6d6, 0 1px 0 #c0c0c0;"></div>
<div style="position:absolute;top:1215.81px;font:normal 26.7px/26.7px 'Liberation Sans', sans-serif;color:#111;white-space:nowrap;left:2220.00px;">pin_name</div>
<div style="position:absolute;top:1266.09px;font:normal 26.7px/26.7px 'Liberation Sans', sans-serif;color:#111;white-space:nowrap;left:1974.00px;text-decoration:underline;text-underline-offset:4px;text-decoration-thickness:1.5px;">Width:</div>
<div style="position:absolute;left:2220.00px;top:1263.70px;width:280.00px;height:34.70px;background:#fff;box-shadow:0 0 0 1px #d6d6d6, 0 1px 0 #c0c0c0;"></div>
<div style="position:absolute;top:1268.06px;font:normal 26.7px/26.7px 'Liberation Sans', sans-serif;color:#111;white-space:nowrap;left:2222.00px;">0,13</div>
<div style="position:absolute;left:2505.00px;top:1260.40px;width:26.00px;height:40.20px;background:#fff;border-radius:12px;box-shadow:0 0 0 1px #d0d0d0, 0 1px 1px rgba(0,0,0,0.15);"></div>
<svg style="position:absolute;left:2505px;top:1260.4px;" width="26" height="40.19999999999982" viewBox="0 0 26 40.19999999999982"><path d="M6.0 13.265999999999941 L13.0 8.039999999999964 L20.0 13.265999999999941 M6.0 26.93399999999988 L13.0 32.159999999999854 L20.0 26.93399999999988" fill="none" stroke="#222" stroke-width="2.6" stroke-linecap="round" stroke-linejoin="round"/><path d="M3 20.09999999999991 L23 20.09999999999991" stroke="#e2e2e2" stroke-width="1"/></svg>
<div style="position:absolute;top:1266.89px;font:normal 26.7px/26.7px 'Liberation Sans', sans-serif;color:#111;white-space:nowrap;left:2552.00px;">µm</div>
<div style="position:absolute;top:1318.39px;font:normal 26.7px/26.7px 'Liberation Sans', sans-serif;color:#111;white-space:nowrap;left:1974.00px;text-decoration:underline;text-underline-offset:4px;text-decoration-thickness:1.5px;">Height:</div>
<div style="position:absolute;left:2220.00px;top:1315.00px;width:280.00px;height:34.80px;background:#fff;box-shadow:0 0 0 1px #d6d6d6, 0 1px 0 #c0c0c0;"></div>
<div style="position:absolute;top:1319.41px;font:normal 26.7px/26.7px 'Liberation Sans', sans-serif;color:#111;white-space:nowrap;left:2222.00px;">0,13</div>
<div style="position:absolute;left:2505.00px;top:1312.60px;width:26.00px;height:39.90px;background:#fff;border-radius:12px;box-shadow:0 0 0 1px #d0d0d0, 0 1px 1px rgba(0,0,0,0.15);"></div>
<svg style="position:absolute;left:2505px;top:1312.6px;" width="26" height="39.90000000000009" viewBox="0 0 26 39.90000000000009"><path d="M6.0 13.16700000000003 L13.0 7.980000000000018 L20.0 13.16700000000003 M6.0 26.73300000000006 L13.0 31.920000000000073 L20.0 26.73300000000006" fill="none" stroke="#222" stroke-width="2.6" stroke-linecap="round" stroke-linejoin="round"/><path d="M3 19.950000000000045 L23 19.950000000000045" stroke="#e2e2e2" stroke-width="1"/></svg>
<div style="position:absolute;top:1319.39px;font:normal 26.7px/26.7px 'Liberation Sans', sans-serif;color:#111;white-space:nowrap;left:2552.00px;">µm</div>
<div style="position:absolute;top:1369.59px;font:normal 26.7px/26.7px 'Liberation Sans', sans-serif;color:#8c8c8c;white-space:nowrap;left:1974.00px;text-decoration:underline;text-underline-offset:4px;text-decoration-thickness:1.5px;">Hint:</div>
<div style="position:absolute;top:1369.59px;font:normal 26.7px/26.7px 'Liberation Sans', sans-serif;color:#8c8c8c;white-space:nowrap;left:2037.00px;">Esc to cancel</div>
</body></html>
